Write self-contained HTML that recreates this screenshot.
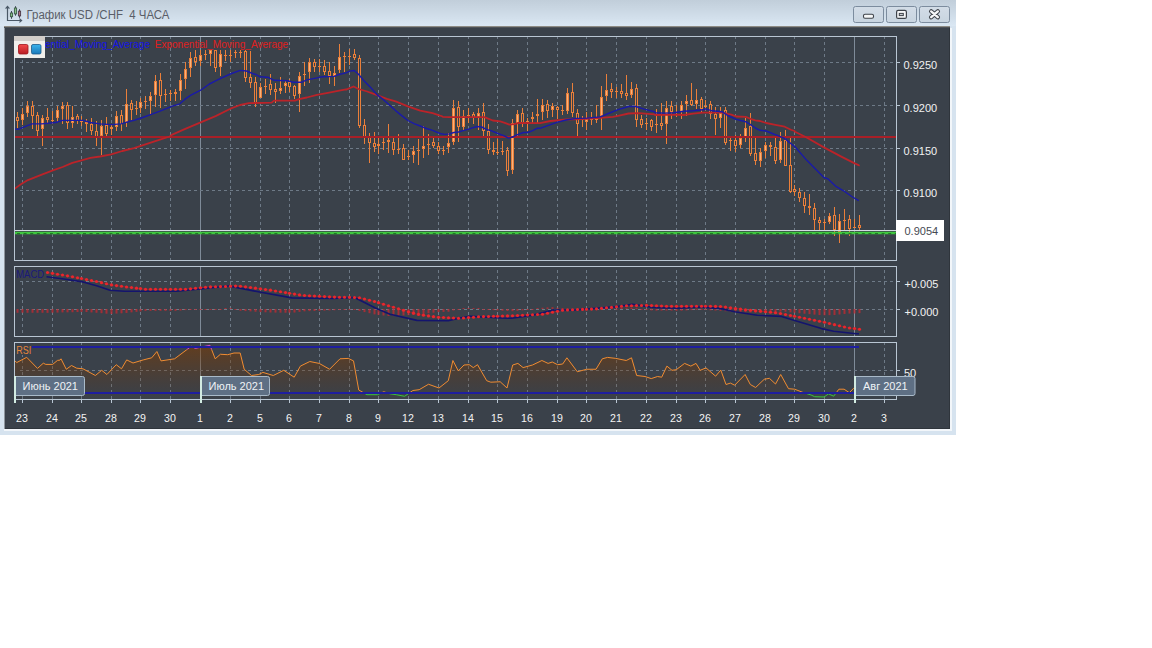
<!DOCTYPE html><html><head><meta charset="utf-8"><title>USD/CHF</title><style>
html,body{margin:0;padding:0;width:1152px;height:648px;background:#fff;overflow:hidden}
svg{display:block;font-family:"Liberation Sans",sans-serif}
</style></head><body>
<svg width="1152" height="648" viewBox="0 0 1152 648">
<defs>
<linearGradient id="tb" x1="0" y1="0" x2="0" y2="1"><stop offset="0" stop-color="#c1ceda"/><stop offset="1" stop-color="#dae7f3"/></linearGradient>
<linearGradient id="btn" x1="0" y1="0" x2="0" y2="1"><stop offset="0" stop-color="#d3dde7"/><stop offset="1" stop-color="#c8d4e0"/></linearGradient>
<linearGradient id="rsif" x1="0" y1="342" x2="0" y2="399" gradientUnits="userSpaceOnUse"><stop offset="0" stop-color="#803c00" stop-opacity="0.62"/><stop offset="1" stop-color="#6a3408" stop-opacity="0.0"/></linearGradient>
<linearGradient id="lr" x1="0" y1="0" x2="0" y2="1"><stop offset="0" stop-color="#f24a4a"/><stop offset="1" stop-color="#b81c22"/></linearGradient>
<linearGradient id="lb" x1="0" y1="0" x2="0" y2="1"><stop offset="0" stop-color="#3cb4ec"/><stop offset="1" stop-color="#1a78b8"/></linearGradient>
<clipPath id="cmain"><rect x="15" y="37" width="881" height="223"/></clipPath>
<clipPath id="cmacd"><rect x="15" y="267" width="881" height="69"/></clipPath>
<clipPath id="crsi"><rect x="15" y="343" width="881" height="56"/></clipPath><clipPath id="rsimid"><rect x="15" y="349.5" width="881" height="44.5"/></clipPath><clipPath id="rsitop"><rect x="15" y="343" width="881" height="6.5"/></clipPath><clipPath id="rsibot"><rect x="15" y="394" width="881" height="5"/></clipPath>
</defs>
<rect x="0" y="0" width="956" height="435" fill="#d6e3ef"/>
<rect x="0" y="0" width="956" height="26" fill="url(#tb)"/>
<rect x="4" y="26" width="946" height="1" fill="#8d8b84"/>
<rect x="4" y="27" width="1" height="402" fill="#8f969e"/>
<rect x="4" y="27" width="946" height="1" fill="#4e5257"/>
<rect x="5" y="28" width="945" height="401" fill="#3a414a"/>
<rect x="4" y="429" width="948" height="2" fill="#f2f6fa"/>
<rect x="950" y="28" width="2" height="403" fill="#f2f6fa"/>
<rect x="5" y="428" width="945" height="1" fill="#2f353c"/>
<rect x="949" y="28" width="1" height="401" fill="#2f353c"/>
<g fill="none" stroke="#4a5866" stroke-width="1.2">
<path d="M7.5 7 V20.5 H21"/><path d="M5.6 8.6 L7.5 6.4 L9.4 8.6"/><path d="M19.4 18.6 L21.6 20.5 L19.4 22.4"/>
</g>
<g stroke="#3e4a56" stroke-width="1">
<line x1="11.5" y1="11" x2="11.5" y2="18.8"/><line x1="15.5" y1="6.2" x2="15.5" y2="15.7"/><line x1="19.5" y1="9.2" x2="19.5" y2="17.8"/>
</g>
<rect x="10.4" y="13" width="2.2" height="3.7" fill="#84c484" stroke="#3e5a48" stroke-width="0.9"/>
<rect x="14.4" y="8" width="2.2" height="5.9" fill="#84c484" stroke="#3e5a48" stroke-width="0.9"/>
<rect x="18.4" y="11.1" width="2.2" height="4.8" fill="#b07080" stroke="#4a3a48" stroke-width="0.9"/>
<text x="26.5" y="19" font-size="12" fill="#5a5e68" textLength="143" lengthAdjust="spacingAndGlyphs">График USD /CHF&#160; 4 ЧАСА</text>
<rect x="853.5" y="6.5" width="30" height="16" rx="2" fill="url(#btn)" stroke="#7c8c9e"/>
<rect x="886.5" y="6.5" width="30" height="16" rx="2" fill="url(#btn)" stroke="#7c8c9e"/>
<rect x="919.5" y="6.5" width="30" height="16" rx="2" fill="url(#btn)" stroke="#7c8c9e"/>
<rect x="863.5" y="14.2" width="10" height="4" rx="1.5" fill="#f6f7f8" stroke="#3e434a" stroke-width="1.1"/>
<rect x="896.6" y="10.4" width="9.8" height="8" rx="1.5" fill="#f6f7f8" stroke="#3e434a" stroke-width="1.2"/>
<rect x="899.3" y="13.4" width="4" height="2.2" fill="#c8ccd0" stroke="#3e434a" stroke-width="1"/>
<path d="M931.2 11.4 L937.8 17.2 M937.8 11.4 L931.2 17.2" stroke="#3e434a" stroke-width="4.4" stroke-linecap="round"/>
<path d="M931.2 11.4 L937.8 17.2 M937.8 11.4 L931.2 17.2" stroke="#f6f7f8" stroke-width="2.4" stroke-linecap="round"/>
<clipPath id="pc0"><rect x="15" y="37.0" width="881" height="223.0"/></clipPath>
<rect x="14.5" y="36.5" width="882" height="224.0" fill="none" stroke="#b9c6d3"/>
<g clip-path="url(#pc0)">
<line x1="22.5" y1="36" x2="22.5" y2="260.0" stroke="#6e7a87" stroke-dasharray="3,3"/>
<line x1="52.5" y1="36" x2="52.5" y2="260.0" stroke="#6e7a87" stroke-dasharray="3,3"/>
<line x1="81.5" y1="36" x2="81.5" y2="260.0" stroke="#6e7a87" stroke-dasharray="3,3"/>
<line x1="111.5" y1="36" x2="111.5" y2="260.0" stroke="#6e7a87" stroke-dasharray="3,3"/>
<line x1="140.5" y1="36" x2="140.5" y2="260.0" stroke="#6e7a87" stroke-dasharray="3,3"/>
<line x1="170.5" y1="36" x2="170.5" y2="260.0" stroke="#6e7a87" stroke-dasharray="3,3"/>
<line x1="200.5" y1="37.0" x2="200.5" y2="260.0" stroke="#7f8b99"/>
<line x1="230.5" y1="36" x2="230.5" y2="260.0" stroke="#6e7a87" stroke-dasharray="3,3"/>
<line x1="260.5" y1="36" x2="260.5" y2="260.0" stroke="#6e7a87" stroke-dasharray="3,3"/>
<line x1="289.5" y1="36" x2="289.5" y2="260.0" stroke="#6e7a87" stroke-dasharray="3,3"/>
<line x1="319.5" y1="36" x2="319.5" y2="260.0" stroke="#6e7a87" stroke-dasharray="3,3"/>
<line x1="349.5" y1="36" x2="349.5" y2="260.0" stroke="#6e7a87" stroke-dasharray="3,3"/>
<line x1="378.5" y1="36" x2="378.5" y2="260.0" stroke="#6e7a87" stroke-dasharray="3,3"/>
<line x1="408.5" y1="36" x2="408.5" y2="260.0" stroke="#6e7a87" stroke-dasharray="3,3"/>
<line x1="438.5" y1="36" x2="438.5" y2="260.0" stroke="#6e7a87" stroke-dasharray="3,3"/>
<line x1="468.5" y1="36" x2="468.5" y2="260.0" stroke="#6e7a87" stroke-dasharray="3,3"/>
<line x1="497.5" y1="36" x2="497.5" y2="260.0" stroke="#6e7a87" stroke-dasharray="3,3"/>
<line x1="527.5" y1="36" x2="527.5" y2="260.0" stroke="#6e7a87" stroke-dasharray="3,3"/>
<line x1="557.5" y1="36" x2="557.5" y2="260.0" stroke="#6e7a87" stroke-dasharray="3,3"/>
<line x1="586.5" y1="36" x2="586.5" y2="260.0" stroke="#6e7a87" stroke-dasharray="3,3"/>
<line x1="616.5" y1="36" x2="616.5" y2="260.0" stroke="#6e7a87" stroke-dasharray="3,3"/>
<line x1="646.5" y1="36" x2="646.5" y2="260.0" stroke="#6e7a87" stroke-dasharray="3,3"/>
<line x1="676.5" y1="36" x2="676.5" y2="260.0" stroke="#6e7a87" stroke-dasharray="3,3"/>
<line x1="705.5" y1="36" x2="705.5" y2="260.0" stroke="#6e7a87" stroke-dasharray="3,3"/>
<line x1="735.5" y1="36" x2="735.5" y2="260.0" stroke="#6e7a87" stroke-dasharray="3,3"/>
<line x1="765.5" y1="36" x2="765.5" y2="260.0" stroke="#6e7a87" stroke-dasharray="3,3"/>
<line x1="794.5" y1="36" x2="794.5" y2="260.0" stroke="#6e7a87" stroke-dasharray="3,3"/>
<line x1="824.5" y1="36" x2="824.5" y2="260.0" stroke="#6e7a87" stroke-dasharray="3,3"/>
<line x1="854.5" y1="37.0" x2="854.5" y2="260.0" stroke="#7f8b99"/>
<line x1="884.5" y1="36" x2="884.5" y2="260.0" stroke="#6e7a87" stroke-dasharray="3,3"/>
</g>
<clipPath id="pc1"><rect x="15" y="267.0" width="881" height="69.0"/></clipPath>
<rect x="14.5" y="266.5" width="882" height="70.0" fill="none" stroke="#b9c6d3"/>
<g clip-path="url(#pc1)">
<line x1="22.5" y1="264" x2="22.5" y2="336.0" stroke="#6e7a87" stroke-dasharray="3,3"/>
<line x1="52.5" y1="264" x2="52.5" y2="336.0" stroke="#6e7a87" stroke-dasharray="3,3"/>
<line x1="81.5" y1="264" x2="81.5" y2="336.0" stroke="#6e7a87" stroke-dasharray="3,3"/>
<line x1="111.5" y1="264" x2="111.5" y2="336.0" stroke="#6e7a87" stroke-dasharray="3,3"/>
<line x1="140.5" y1="264" x2="140.5" y2="336.0" stroke="#6e7a87" stroke-dasharray="3,3"/>
<line x1="170.5" y1="264" x2="170.5" y2="336.0" stroke="#6e7a87" stroke-dasharray="3,3"/>
<line x1="200.5" y1="267.0" x2="200.5" y2="336.0" stroke="#7f8b99"/>
<line x1="230.5" y1="264" x2="230.5" y2="336.0" stroke="#6e7a87" stroke-dasharray="3,3"/>
<line x1="260.5" y1="264" x2="260.5" y2="336.0" stroke="#6e7a87" stroke-dasharray="3,3"/>
<line x1="289.5" y1="264" x2="289.5" y2="336.0" stroke="#6e7a87" stroke-dasharray="3,3"/>
<line x1="319.5" y1="264" x2="319.5" y2="336.0" stroke="#6e7a87" stroke-dasharray="3,3"/>
<line x1="349.5" y1="264" x2="349.5" y2="336.0" stroke="#6e7a87" stroke-dasharray="3,3"/>
<line x1="378.5" y1="264" x2="378.5" y2="336.0" stroke="#6e7a87" stroke-dasharray="3,3"/>
<line x1="408.5" y1="264" x2="408.5" y2="336.0" stroke="#6e7a87" stroke-dasharray="3,3"/>
<line x1="438.5" y1="264" x2="438.5" y2="336.0" stroke="#6e7a87" stroke-dasharray="3,3"/>
<line x1="468.5" y1="264" x2="468.5" y2="336.0" stroke="#6e7a87" stroke-dasharray="3,3"/>
<line x1="497.5" y1="264" x2="497.5" y2="336.0" stroke="#6e7a87" stroke-dasharray="3,3"/>
<line x1="527.5" y1="264" x2="527.5" y2="336.0" stroke="#6e7a87" stroke-dasharray="3,3"/>
<line x1="557.5" y1="264" x2="557.5" y2="336.0" stroke="#6e7a87" stroke-dasharray="3,3"/>
<line x1="586.5" y1="264" x2="586.5" y2="336.0" stroke="#6e7a87" stroke-dasharray="3,3"/>
<line x1="616.5" y1="264" x2="616.5" y2="336.0" stroke="#6e7a87" stroke-dasharray="3,3"/>
<line x1="646.5" y1="264" x2="646.5" y2="336.0" stroke="#6e7a87" stroke-dasharray="3,3"/>
<line x1="676.5" y1="264" x2="676.5" y2="336.0" stroke="#6e7a87" stroke-dasharray="3,3"/>
<line x1="705.5" y1="264" x2="705.5" y2="336.0" stroke="#6e7a87" stroke-dasharray="3,3"/>
<line x1="735.5" y1="264" x2="735.5" y2="336.0" stroke="#6e7a87" stroke-dasharray="3,3"/>
<line x1="765.5" y1="264" x2="765.5" y2="336.0" stroke="#6e7a87" stroke-dasharray="3,3"/>
<line x1="794.5" y1="264" x2="794.5" y2="336.0" stroke="#6e7a87" stroke-dasharray="3,3"/>
<line x1="824.5" y1="264" x2="824.5" y2="336.0" stroke="#6e7a87" stroke-dasharray="3,3"/>
<line x1="854.5" y1="267.0" x2="854.5" y2="336.0" stroke="#7f8b99"/>
<line x1="884.5" y1="264" x2="884.5" y2="336.0" stroke="#6e7a87" stroke-dasharray="3,3"/>
</g>
<clipPath id="pc2"><rect x="15" y="343.0" width="881" height="56.0"/></clipPath>
<rect x="14.5" y="342.5" width="882" height="57.0" fill="none" stroke="#b9c6d3"/>
<g clip-path="url(#pc2)">
<line x1="22.5" y1="342" x2="22.5" y2="399.0" stroke="#6e7a87" stroke-dasharray="3,3"/>
<line x1="52.5" y1="342" x2="52.5" y2="399.0" stroke="#6e7a87" stroke-dasharray="3,3"/>
<line x1="81.5" y1="342" x2="81.5" y2="399.0" stroke="#6e7a87" stroke-dasharray="3,3"/>
<line x1="111.5" y1="342" x2="111.5" y2="399.0" stroke="#6e7a87" stroke-dasharray="3,3"/>
<line x1="140.5" y1="342" x2="140.5" y2="399.0" stroke="#6e7a87" stroke-dasharray="3,3"/>
<line x1="170.5" y1="342" x2="170.5" y2="399.0" stroke="#6e7a87" stroke-dasharray="3,3"/>
<line x1="200.5" y1="343.0" x2="200.5" y2="399.0" stroke="#7f8b99"/>
<line x1="230.5" y1="342" x2="230.5" y2="399.0" stroke="#6e7a87" stroke-dasharray="3,3"/>
<line x1="260.5" y1="342" x2="260.5" y2="399.0" stroke="#6e7a87" stroke-dasharray="3,3"/>
<line x1="289.5" y1="342" x2="289.5" y2="399.0" stroke="#6e7a87" stroke-dasharray="3,3"/>
<line x1="319.5" y1="342" x2="319.5" y2="399.0" stroke="#6e7a87" stroke-dasharray="3,3"/>
<line x1="349.5" y1="342" x2="349.5" y2="399.0" stroke="#6e7a87" stroke-dasharray="3,3"/>
<line x1="378.5" y1="342" x2="378.5" y2="399.0" stroke="#6e7a87" stroke-dasharray="3,3"/>
<line x1="408.5" y1="342" x2="408.5" y2="399.0" stroke="#6e7a87" stroke-dasharray="3,3"/>
<line x1="438.5" y1="342" x2="438.5" y2="399.0" stroke="#6e7a87" stroke-dasharray="3,3"/>
<line x1="468.5" y1="342" x2="468.5" y2="399.0" stroke="#6e7a87" stroke-dasharray="3,3"/>
<line x1="497.5" y1="342" x2="497.5" y2="399.0" stroke="#6e7a87" stroke-dasharray="3,3"/>
<line x1="527.5" y1="342" x2="527.5" y2="399.0" stroke="#6e7a87" stroke-dasharray="3,3"/>
<line x1="557.5" y1="342" x2="557.5" y2="399.0" stroke="#6e7a87" stroke-dasharray="3,3"/>
<line x1="586.5" y1="342" x2="586.5" y2="399.0" stroke="#6e7a87" stroke-dasharray="3,3"/>
<line x1="616.5" y1="342" x2="616.5" y2="399.0" stroke="#6e7a87" stroke-dasharray="3,3"/>
<line x1="646.5" y1="342" x2="646.5" y2="399.0" stroke="#6e7a87" stroke-dasharray="3,3"/>
<line x1="676.5" y1="342" x2="676.5" y2="399.0" stroke="#6e7a87" stroke-dasharray="3,3"/>
<line x1="705.5" y1="342" x2="705.5" y2="399.0" stroke="#6e7a87" stroke-dasharray="3,3"/>
<line x1="735.5" y1="342" x2="735.5" y2="399.0" stroke="#6e7a87" stroke-dasharray="3,3"/>
<line x1="765.5" y1="342" x2="765.5" y2="399.0" stroke="#6e7a87" stroke-dasharray="3,3"/>
<line x1="794.5" y1="342" x2="794.5" y2="399.0" stroke="#6e7a87" stroke-dasharray="3,3"/>
<line x1="824.5" y1="342" x2="824.5" y2="399.0" stroke="#6e7a87" stroke-dasharray="3,3"/>
<line x1="854.5" y1="343.0" x2="854.5" y2="399.0" stroke="#7f8b99"/>
<line x1="884.5" y1="342" x2="884.5" y2="399.0" stroke="#6e7a87" stroke-dasharray="3,3"/>
</g>
<line x1="20" y1="62.5" x2="896" y2="62.5" stroke="#6e7a87" stroke-dasharray="3,3"/>
<line x1="896.5" y1="62.5" x2="900" y2="62.5" stroke="#b9c6d3"/>
<line x1="20" y1="105.5" x2="896" y2="105.5" stroke="#6e7a87" stroke-dasharray="3,3"/>
<line x1="896.5" y1="105.5" x2="900" y2="105.5" stroke="#b9c6d3"/>
<line x1="20" y1="148.5" x2="896" y2="148.5" stroke="#6e7a87" stroke-dasharray="3,3"/>
<line x1="896.5" y1="148.5" x2="900" y2="148.5" stroke="#b9c6d3"/>
<line x1="20" y1="190.5" x2="896" y2="190.5" stroke="#6e7a87" stroke-dasharray="3,3"/>
<line x1="896.5" y1="190.5" x2="900" y2="190.5" stroke="#b9c6d3"/>
<text x="903.5" y="69.0" font-size="11" fill="#f2f2f2">0.9250</text>
<text x="903.5" y="112.0" font-size="11" fill="#f2f2f2">0.9200</text>
<text x="903.5" y="155.0" font-size="11" fill="#f2f2f2">0.9150</text>
<text x="903.5" y="197.0" font-size="11" fill="#f2f2f2">0.9100</text>
<line x1="20" y1="281.5" x2="896" y2="281.5" stroke="#6e7a87" stroke-dasharray="3,3"/>
<line x1="896.5" y1="281.5" x2="900" y2="281.5" stroke="#b9c6d3"/>
<text x="904.5" y="288.0" font-size="11" fill="#f2f2f2">+0.005</text>
<line x1="20" y1="309.5" x2="896" y2="309.5" stroke="#6e7a87" stroke-dasharray="3,3"/>
<line x1="896.5" y1="309.5" x2="900" y2="309.5" stroke="#b9c6d3"/>
<text x="904.5" y="316.0" font-size="11" fill="#f2f2f2">+0.000</text>
<line x1="20" y1="370.5" x2="896" y2="370.5" stroke="#6e7a87" stroke-dasharray="3,3"/>
<line x1="896.5" y1="370.5" x2="900" y2="370.5" stroke="#b9c6d3"/>
<text x="904" y="377" font-size="11" fill="#f2f2f2">50</text>
<g clip-path="url(#cmain)">
<line x1="17.5" y1="112" x2="17.5" y2="128" stroke="#ea7f3a"/>
<rect x="16.5" y="117.5" width="2" height="3" fill="#3a414a" stroke="#ea7f3a"/>
<line x1="22.5" y1="108" x2="22.5" y2="125" stroke="#ea7f3a"/>
<rect x="21.5" y="114.5" width="2" height="5" fill="#fbb27a" stroke="#ea7f3a"/>
<line x1="27.5" y1="101" x2="27.5" y2="117" stroke="#ea7f3a"/>
<rect x="26.5" y="106.5" width="2" height="6" fill="#fbb27a" stroke="#ea7f3a"/>
<line x1="32.5" y1="101" x2="32.5" y2="129" stroke="#ea7f3a"/>
<rect x="31.5" y="106.5" width="2" height="9" fill="#3a414a" stroke="#ea7f3a"/>
<line x1="37.5" y1="112" x2="37.5" y2="136" stroke="#ea7f3a"/>
<rect x="36.5" y="115.5" width="2" height="15" fill="#3a414a" stroke="#ea7f3a"/>
<line x1="42.5" y1="115" x2="42.5" y2="146" stroke="#ea7f3a"/>
<rect x="41.5" y="118.5" width="2" height="10" fill="#fbb27a" stroke="#ea7f3a"/>
<line x1="47.5" y1="108" x2="47.5" y2="124" stroke="#ea7f3a"/>
<rect x="46.5" y="117.5" width="2" height="2" fill="#3a414a" stroke="#ea7f3a"/>
<line x1="52.5" y1="111" x2="52.5" y2="124" stroke="#ea7f3a"/>
<rect x="51" y="120" width="3" height="1" fill="#ea7f3a"/>
<line x1="57.5" y1="106" x2="57.5" y2="122" stroke="#ea7f3a"/>
<rect x="56.5" y="110.5" width="2" height="7" fill="#fbb27a" stroke="#ea7f3a"/>
<line x1="62.5" y1="102" x2="62.5" y2="124" stroke="#ea7f3a"/>
<rect x="61.5" y="106.5" width="2" height="2" fill="#fbb27a" stroke="#ea7f3a"/>
<line x1="67.5" y1="102" x2="67.5" y2="129" stroke="#ea7f3a"/>
<rect x="66.5" y="105.5" width="2" height="17" fill="#3a414a" stroke="#ea7f3a"/>
<line x1="72.5" y1="106" x2="72.5" y2="128" stroke="#ea7f3a"/>
<rect x="71.5" y="117.5" width="2" height="5" fill="#fbb27a" stroke="#ea7f3a"/>
<line x1="77.5" y1="114" x2="77.5" y2="124" stroke="#ea7f3a"/>
<rect x="76.5" y="116.5" width="2" height="4" fill="#3a414a" stroke="#ea7f3a"/>
<line x1="81.5" y1="116" x2="81.5" y2="126" stroke="#ea7f3a"/>
<rect x="80" y="121" width="3" height="1" fill="#ea7f3a"/>
<line x1="86.5" y1="119" x2="86.5" y2="132" stroke="#ea7f3a"/>
<rect x="85.5" y="122.5" width="2" height="1" fill="#3a414a" stroke="#ea7f3a"/>
<line x1="91.5" y1="118" x2="91.5" y2="135" stroke="#ea7f3a"/>
<rect x="90.5" y="124.5" width="2" height="6" fill="#3a414a" stroke="#ea7f3a"/>
<line x1="96.5" y1="121" x2="96.5" y2="146" stroke="#ea7f3a"/>
<rect x="95.5" y="131.5" width="2" height="5" fill="#3a414a" stroke="#ea7f3a"/>
<line x1="101.5" y1="120" x2="101.5" y2="155" stroke="#ea7f3a"/>
<rect x="100.5" y="126.5" width="2" height="9" fill="#fbb27a" stroke="#ea7f3a"/>
<line x1="106.5" y1="117" x2="106.5" y2="136" stroke="#ea7f3a"/>
<rect x="105.5" y="125.5" width="2" height="8" fill="#3a414a" stroke="#ea7f3a"/>
<line x1="111.5" y1="124" x2="111.5" y2="135" stroke="#ea7f3a"/>
<rect x="110.5" y="127.5" width="2" height="1" fill="#fbb27a" stroke="#ea7f3a"/>
<line x1="116.5" y1="111" x2="116.5" y2="131" stroke="#ea7f3a"/>
<rect x="115.5" y="116.5" width="2" height="10" fill="#fbb27a" stroke="#ea7f3a"/>
<line x1="121.5" y1="110" x2="121.5" y2="131" stroke="#ea7f3a"/>
<rect x="120.5" y="115.5" width="2" height="8" fill="#3a414a" stroke="#ea7f3a"/>
<line x1="126.5" y1="89" x2="126.5" y2="127" stroke="#ea7f3a"/>
<rect x="125.5" y="104.5" width="2" height="17" fill="#fbb27a" stroke="#ea7f3a"/>
<line x1="131.5" y1="100" x2="131.5" y2="120" stroke="#ea7f3a"/>
<rect x="130.5" y="103.5" width="2" height="6" fill="#3a414a" stroke="#ea7f3a"/>
<line x1="136.5" y1="101" x2="136.5" y2="115" stroke="#ea7f3a"/>
<rect x="135" y="108" width="3" height="1" fill="#ea7f3a"/>
<line x1="140.5" y1="98" x2="140.5" y2="113" stroke="#ea7f3a"/>
<rect x="139.5" y="102.5" width="2" height="5" fill="#fbb27a" stroke="#ea7f3a"/>
<line x1="145.5" y1="96" x2="145.5" y2="109" stroke="#ea7f3a"/>
<rect x="144" y="101" width="3" height="1" fill="#ea7f3a"/>
<line x1="150.5" y1="92" x2="150.5" y2="114" stroke="#ea7f3a"/>
<rect x="149.5" y="96.5" width="2" height="4" fill="#fbb27a" stroke="#ea7f3a"/>
<line x1="155.5" y1="75" x2="155.5" y2="107" stroke="#ea7f3a"/>
<rect x="154.5" y="81.5" width="2" height="13" fill="#fbb27a" stroke="#ea7f3a"/>
<line x1="160.5" y1="73" x2="160.5" y2="108" stroke="#ea7f3a"/>
<rect x="159.5" y="80.5" width="2" height="15" fill="#3a414a" stroke="#ea7f3a"/>
<line x1="165.5" y1="89" x2="165.5" y2="102" stroke="#ea7f3a"/>
<rect x="164" y="94" width="3" height="1" fill="#ea7f3a"/>
<line x1="170.5" y1="90" x2="170.5" y2="101" stroke="#ea7f3a"/>
<rect x="169" y="93" width="3" height="1" fill="#ea7f3a"/>
<line x1="175.5" y1="89" x2="175.5" y2="101" stroke="#ea7f3a"/>
<rect x="174.5" y="92.5" width="2" height="1" fill="#fbb27a" stroke="#ea7f3a"/>
<line x1="180.5" y1="74" x2="180.5" y2="100" stroke="#ea7f3a"/>
<rect x="179.5" y="80.5" width="2" height="10" fill="#fbb27a" stroke="#ea7f3a"/>
<line x1="185.5" y1="62" x2="185.5" y2="89" stroke="#ea7f3a"/>
<rect x="184.5" y="69.5" width="2" height="9" fill="#fbb27a" stroke="#ea7f3a"/>
<line x1="190.5" y1="52" x2="190.5" y2="77" stroke="#ea7f3a"/>
<rect x="189.5" y="58.5" width="2" height="9" fill="#fbb27a" stroke="#ea7f3a"/>
<line x1="195.5" y1="50" x2="195.5" y2="66" stroke="#ea7f3a"/>
<rect x="194.5" y="57.5" width="2" height="4" fill="#3a414a" stroke="#ea7f3a"/>
<line x1="200.5" y1="50" x2="200.5" y2="66" stroke="#ea7f3a"/>
<rect x="199.5" y="55.5" width="2" height="5" fill="#fbb27a" stroke="#ea7f3a"/>
<line x1="205.5" y1="50" x2="205.5" y2="60" stroke="#ea7f3a"/>
<rect x="204" y="54" width="3" height="1" fill="#ea7f3a"/>
<line x1="210.5" y1="50" x2="210.5" y2="66" stroke="#ea7f3a"/>
<rect x="209.5" y="50.5" width="2" height="3" fill="#fbb27a" stroke="#ea7f3a"/>
<line x1="215.5" y1="50" x2="215.5" y2="72" stroke="#ea7f3a"/>
<rect x="214.5" y="50.5" width="2" height="17" fill="#3a414a" stroke="#ea7f3a"/>
<line x1="220.5" y1="50" x2="220.5" y2="76" stroke="#ea7f3a"/>
<rect x="219.5" y="54.5" width="2" height="12" fill="#fbb27a" stroke="#ea7f3a"/>
<line x1="225.5" y1="50" x2="225.5" y2="61" stroke="#ea7f3a"/>
<rect x="224" y="55" width="3" height="1" fill="#ea7f3a"/>
<line x1="230.5" y1="50" x2="230.5" y2="62" stroke="#ea7f3a"/>
<rect x="229" y="55" width="3" height="1" fill="#ea7f3a"/>
<line x1="235.5" y1="50" x2="235.5" y2="58" stroke="#ea7f3a"/>
<rect x="234" y="52" width="3" height="1" fill="#ea7f3a"/>
<line x1="240.5" y1="50" x2="240.5" y2="58" stroke="#ea7f3a"/>
<rect x="239" y="52" width="3" height="1" fill="#ea7f3a"/>
<line x1="245.5" y1="50" x2="245.5" y2="82" stroke="#ea7f3a"/>
<rect x="244.5" y="51.5" width="2" height="26" fill="#3a414a" stroke="#ea7f3a"/>
<line x1="250.5" y1="51" x2="250.5" y2="88" stroke="#ea7f3a"/>
<rect x="249.5" y="77.5" width="2" height="5" fill="#3a414a" stroke="#ea7f3a"/>
<line x1="255.5" y1="77" x2="255.5" y2="107" stroke="#ea7f3a"/>
<rect x="254.5" y="82.5" width="2" height="20" fill="#3a414a" stroke="#ea7f3a"/>
<line x1="260.5" y1="83" x2="260.5" y2="98" stroke="#ea7f3a"/>
<rect x="259.5" y="87.5" width="2" height="10" fill="#fbb27a" stroke="#ea7f3a"/>
<line x1="265.5" y1="79" x2="265.5" y2="94" stroke="#ea7f3a"/>
<rect x="264" y="86" width="3" height="1" fill="#ea7f3a"/>
<line x1="270.5" y1="74" x2="270.5" y2="95" stroke="#ea7f3a"/>
<rect x="269.5" y="84.5" width="2" height="5" fill="#3a414a" stroke="#ea7f3a"/>
<line x1="275.5" y1="83" x2="275.5" y2="103" stroke="#ea7f3a"/>
<rect x="274.5" y="89.5" width="2" height="2" fill="#3a414a" stroke="#ea7f3a"/>
<line x1="280.5" y1="77" x2="280.5" y2="94" stroke="#ea7f3a"/>
<rect x="279.5" y="88.5" width="2" height="2" fill="#fbb27a" stroke="#ea7f3a"/>
<line x1="285.5" y1="80" x2="285.5" y2="93" stroke="#ea7f3a"/>
<rect x="284.5" y="83.5" width="2" height="2" fill="#fbb27a" stroke="#ea7f3a"/>
<line x1="289.5" y1="79" x2="289.5" y2="92" stroke="#ea7f3a"/>
<rect x="288.5" y="82.5" width="2" height="4" fill="#3a414a" stroke="#ea7f3a"/>
<line x1="294.5" y1="85" x2="294.5" y2="99" stroke="#ea7f3a"/>
<rect x="293.5" y="86.5" width="2" height="9" fill="#3a414a" stroke="#ea7f3a"/>
<line x1="299.5" y1="72" x2="299.5" y2="112" stroke="#ea7f3a"/>
<rect x="298.5" y="76.5" width="2" height="17" fill="#fbb27a" stroke="#ea7f3a"/>
<line x1="304.5" y1="62" x2="304.5" y2="86" stroke="#ea7f3a"/>
<rect x="303" y="74" width="3" height="1" fill="#ea7f3a"/>
<line x1="309.5" y1="58" x2="309.5" y2="83" stroke="#ea7f3a"/>
<rect x="308.5" y="62.5" width="2" height="9" fill="#fbb27a" stroke="#ea7f3a"/>
<line x1="314.5" y1="59" x2="314.5" y2="72" stroke="#ea7f3a"/>
<rect x="313.5" y="62.5" width="2" height="4" fill="#3a414a" stroke="#ea7f3a"/>
<line x1="319.5" y1="59" x2="319.5" y2="72" stroke="#ea7f3a"/>
<rect x="318" y="66" width="3" height="1" fill="#ea7f3a"/>
<line x1="324.5" y1="60" x2="324.5" y2="75" stroke="#ea7f3a"/>
<rect x="323.5" y="66.5" width="2" height="5" fill="#3a414a" stroke="#ea7f3a"/>
<line x1="329.5" y1="62" x2="329.5" y2="84" stroke="#ea7f3a"/>
<rect x="328.5" y="71.5" width="2" height="4" fill="#3a414a" stroke="#ea7f3a"/>
<line x1="334.5" y1="66" x2="334.5" y2="86" stroke="#ea7f3a"/>
<rect x="333.5" y="73.5" width="2" height="2" fill="#fbb27a" stroke="#ea7f3a"/>
<line x1="339.5" y1="44" x2="339.5" y2="73" stroke="#ea7f3a"/>
<rect x="338.5" y="57.5" width="2" height="12" fill="#fbb27a" stroke="#ea7f3a"/>
<line x1="344.5" y1="52" x2="344.5" y2="72" stroke="#ea7f3a"/>
<rect x="343" y="56" width="3" height="1" fill="#ea7f3a"/>
<line x1="349.5" y1="49" x2="349.5" y2="65" stroke="#ea7f3a"/>
<rect x="348" y="56" width="3" height="1" fill="#ea7f3a"/>
<line x1="354.5" y1="49" x2="354.5" y2="60" stroke="#ea7f3a"/>
<rect x="353.5" y="54.5" width="2" height="3" fill="#3a414a" stroke="#ea7f3a"/>
<line x1="359.5" y1="55" x2="359.5" y2="128" stroke="#ea7f3a"/>
<rect x="358.5" y="58.5" width="2" height="67" fill="#3a414a" stroke="#ea7f3a"/>
<line x1="364.5" y1="119" x2="364.5" y2="144" stroke="#ea7f3a"/>
<rect x="363.5" y="125.5" width="2" height="11" fill="#3a414a" stroke="#ea7f3a"/>
<line x1="369.5" y1="133" x2="369.5" y2="163" stroke="#ea7f3a"/>
<rect x="368.5" y="137.5" width="2" height="5" fill="#3a414a" stroke="#ea7f3a"/>
<line x1="374.5" y1="132" x2="374.5" y2="152" stroke="#ea7f3a"/>
<rect x="373.5" y="143.5" width="2" height="3" fill="#3a414a" stroke="#ea7f3a"/>
<line x1="378.5" y1="138" x2="378.5" y2="154" stroke="#ea7f3a"/>
<rect x="377.5" y="144.5" width="2" height="1" fill="#fbb27a" stroke="#ea7f3a"/>
<line x1="383.5" y1="138" x2="383.5" y2="150" stroke="#ea7f3a"/>
<rect x="382" y="142" width="3" height="1" fill="#ea7f3a"/>
<line x1="388.5" y1="124" x2="388.5" y2="153" stroke="#ea7f3a"/>
<rect x="387.5" y="140.5" width="2" height="1" fill="#3a414a" stroke="#ea7f3a"/>
<line x1="393.5" y1="138" x2="393.5" y2="155" stroke="#ea7f3a"/>
<rect x="392.5" y="142.5" width="2" height="7" fill="#3a414a" stroke="#ea7f3a"/>
<line x1="398.5" y1="134" x2="398.5" y2="154" stroke="#ea7f3a"/>
<rect x="397" y="149" width="3" height="1" fill="#ea7f3a"/>
<line x1="403.5" y1="144" x2="403.5" y2="160" stroke="#ea7f3a"/>
<rect x="402.5" y="148.5" width="2" height="11" fill="#3a414a" stroke="#ea7f3a"/>
<line x1="408.5" y1="150" x2="408.5" y2="160" stroke="#ea7f3a"/>
<rect x="407" y="156" width="3" height="1" fill="#ea7f3a"/>
<line x1="413.5" y1="146" x2="413.5" y2="163" stroke="#ea7f3a"/>
<rect x="412.5" y="151.5" width="2" height="3" fill="#fbb27a" stroke="#ea7f3a"/>
<line x1="418.5" y1="139" x2="418.5" y2="165" stroke="#ea7f3a"/>
<rect x="417" y="150" width="3" height="1" fill="#ea7f3a"/>
<line x1="423.5" y1="126" x2="423.5" y2="158" stroke="#ea7f3a"/>
<rect x="422.5" y="146.5" width="2" height="2" fill="#fbb27a" stroke="#ea7f3a"/>
<line x1="428.5" y1="134" x2="428.5" y2="155" stroke="#ea7f3a"/>
<rect x="427" y="144" width="3" height="1" fill="#ea7f3a"/>
<line x1="433.5" y1="138" x2="433.5" y2="148" stroke="#ea7f3a"/>
<rect x="432.5" y="142.5" width="2" height="3" fill="#3a414a" stroke="#ea7f3a"/>
<line x1="438.5" y1="142" x2="438.5" y2="154" stroke="#ea7f3a"/>
<rect x="437.5" y="146.5" width="2" height="4" fill="#3a414a" stroke="#ea7f3a"/>
<line x1="443.5" y1="146" x2="443.5" y2="155" stroke="#ea7f3a"/>
<rect x="442" y="150" width="3" height="1" fill="#ea7f3a"/>
<line x1="448.5" y1="133" x2="448.5" y2="153" stroke="#ea7f3a"/>
<rect x="447.5" y="143.5" width="2" height="3" fill="#fbb27a" stroke="#ea7f3a"/>
<line x1="453.5" y1="100" x2="453.5" y2="145" stroke="#ea7f3a"/>
<rect x="452.5" y="108.5" width="2" height="33" fill="#fbb27a" stroke="#ea7f3a"/>
<line x1="458.5" y1="101" x2="458.5" y2="142" stroke="#ea7f3a"/>
<rect x="457.5" y="107.5" width="2" height="19" fill="#3a414a" stroke="#ea7f3a"/>
<line x1="463.5" y1="110" x2="463.5" y2="130" stroke="#ea7f3a"/>
<rect x="462.5" y="116.5" width="2" height="10" fill="#fbb27a" stroke="#ea7f3a"/>
<line x1="468.5" y1="108" x2="468.5" y2="123" stroke="#ea7f3a"/>
<rect x="467" y="115" width="3" height="1" fill="#ea7f3a"/>
<line x1="473.5" y1="112" x2="473.5" y2="124" stroke="#ea7f3a"/>
<rect x="472.5" y="114.5" width="2" height="3" fill="#3a414a" stroke="#ea7f3a"/>
<line x1="478.5" y1="108" x2="478.5" y2="130" stroke="#ea7f3a"/>
<rect x="477.5" y="113.5" width="2" height="3" fill="#fbb27a" stroke="#ea7f3a"/>
<line x1="483.5" y1="103" x2="483.5" y2="136" stroke="#ea7f3a"/>
<rect x="482.5" y="112.5" width="2" height="18" fill="#3a414a" stroke="#ea7f3a"/>
<line x1="488.5" y1="124" x2="488.5" y2="154" stroke="#ea7f3a"/>
<rect x="487.5" y="131.5" width="2" height="18" fill="#3a414a" stroke="#ea7f3a"/>
<line x1="493.5" y1="142" x2="493.5" y2="155" stroke="#ea7f3a"/>
<rect x="492.5" y="150.5" width="2" height="1" fill="#3a414a" stroke="#ea7f3a"/>
<line x1="497.5" y1="139" x2="497.5" y2="155" stroke="#ea7f3a"/>
<rect x="496" y="152" width="3" height="1" fill="#ea7f3a"/>
<line x1="502.5" y1="141" x2="502.5" y2="155" stroke="#ea7f3a"/>
<rect x="501" y="151" width="3" height="1" fill="#ea7f3a"/>
<line x1="507.5" y1="147" x2="507.5" y2="176" stroke="#ea7f3a"/>
<rect x="506.5" y="150.5" width="2" height="20" fill="#3a414a" stroke="#ea7f3a"/>
<line x1="512.5" y1="119" x2="512.5" y2="174" stroke="#ea7f3a"/>
<rect x="511.5" y="123.5" width="2" height="46" fill="#fbb27a" stroke="#ea7f3a"/>
<line x1="517.5" y1="110" x2="517.5" y2="136" stroke="#ea7f3a"/>
<rect x="516.5" y="114.5" width="2" height="8" fill="#fbb27a" stroke="#ea7f3a"/>
<line x1="522.5" y1="108" x2="522.5" y2="127" stroke="#ea7f3a"/>
<rect x="521.5" y="113.5" width="2" height="9" fill="#3a414a" stroke="#ea7f3a"/>
<line x1="527.5" y1="118" x2="527.5" y2="131" stroke="#ea7f3a"/>
<rect x="526" y="121" width="3" height="1" fill="#ea7f3a"/>
<line x1="532.5" y1="112" x2="532.5" y2="124" stroke="#ea7f3a"/>
<rect x="531.5" y="117.5" width="2" height="1" fill="#fbb27a" stroke="#ea7f3a"/>
<line x1="537.5" y1="99" x2="537.5" y2="124" stroke="#ea7f3a"/>
<rect x="536.5" y="114.5" width="2" height="1" fill="#fbb27a" stroke="#ea7f3a"/>
<line x1="542.5" y1="99" x2="542.5" y2="120" stroke="#ea7f3a"/>
<rect x="541.5" y="105.5" width="2" height="6" fill="#fbb27a" stroke="#ea7f3a"/>
<line x1="547.5" y1="100" x2="547.5" y2="118" stroke="#ea7f3a"/>
<rect x="546.5" y="104.5" width="2" height="6" fill="#3a414a" stroke="#ea7f3a"/>
<line x1="552.5" y1="103" x2="552.5" y2="117" stroke="#ea7f3a"/>
<rect x="551.5" y="106.5" width="2" height="3" fill="#fbb27a" stroke="#ea7f3a"/>
<line x1="557.5" y1="106" x2="557.5" y2="119" stroke="#ea7f3a"/>
<rect x="556.5" y="107.5" width="2" height="2" fill="#3a414a" stroke="#ea7f3a"/>
<line x1="562.5" y1="105" x2="562.5" y2="115" stroke="#ea7f3a"/>
<rect x="561" y="110" width="3" height="1" fill="#ea7f3a"/>
<line x1="567.5" y1="88" x2="567.5" y2="114" stroke="#ea7f3a"/>
<rect x="566.5" y="93.5" width="2" height="17" fill="#fbb27a" stroke="#ea7f3a"/>
<line x1="572.5" y1="83" x2="572.5" y2="117" stroke="#ea7f3a"/>
<rect x="571.5" y="92.5" width="2" height="20" fill="#3a414a" stroke="#ea7f3a"/>
<line x1="577.5" y1="109" x2="577.5" y2="137" stroke="#ea7f3a"/>
<rect x="576.5" y="113.5" width="2" height="10" fill="#3a414a" stroke="#ea7f3a"/>
<line x1="582.5" y1="116" x2="582.5" y2="127" stroke="#ea7f3a"/>
<rect x="581" y="119" width="3" height="1" fill="#ea7f3a"/>
<line x1="586.5" y1="112" x2="586.5" y2="130" stroke="#ea7f3a"/>
<rect x="585.5" y="119.5" width="2" height="2" fill="#fbb27a" stroke="#ea7f3a"/>
<line x1="591.5" y1="112" x2="591.5" y2="125" stroke="#ea7f3a"/>
<rect x="590" y="119" width="3" height="1" fill="#ea7f3a"/>
<line x1="596.5" y1="105" x2="596.5" y2="123" stroke="#ea7f3a"/>
<rect x="595" y="119" width="3" height="1" fill="#ea7f3a"/>
<line x1="601.5" y1="86" x2="601.5" y2="130" stroke="#ea7f3a"/>
<rect x="600.5" y="97.5" width="2" height="18" fill="#fbb27a" stroke="#ea7f3a"/>
<line x1="606.5" y1="74" x2="606.5" y2="101" stroke="#ea7f3a"/>
<rect x="605.5" y="90.5" width="2" height="5" fill="#fbb27a" stroke="#ea7f3a"/>
<line x1="611.5" y1="83" x2="611.5" y2="98" stroke="#ea7f3a"/>
<rect x="610.5" y="89.5" width="2" height="2" fill="#3a414a" stroke="#ea7f3a"/>
<line x1="616.5" y1="87" x2="616.5" y2="98" stroke="#ea7f3a"/>
<rect x="615" y="91" width="3" height="1" fill="#ea7f3a"/>
<line x1="621.5" y1="84" x2="621.5" y2="98" stroke="#ea7f3a"/>
<rect x="620.5" y="91.5" width="2" height="2" fill="#3a414a" stroke="#ea7f3a"/>
<line x1="626.5" y1="75" x2="626.5" y2="100" stroke="#ea7f3a"/>
<rect x="625.5" y="93.5" width="2" height="2" fill="#3a414a" stroke="#ea7f3a"/>
<line x1="631.5" y1="82" x2="631.5" y2="98" stroke="#ea7f3a"/>
<rect x="630.5" y="89.5" width="2" height="5" fill="#fbb27a" stroke="#ea7f3a"/>
<line x1="636.5" y1="84" x2="636.5" y2="127" stroke="#ea7f3a"/>
<rect x="635.5" y="88.5" width="2" height="31" fill="#3a414a" stroke="#ea7f3a"/>
<line x1="641.5" y1="115" x2="641.5" y2="128" stroke="#ea7f3a"/>
<rect x="640.5" y="119.5" width="2" height="5" fill="#3a414a" stroke="#ea7f3a"/>
<line x1="646.5" y1="118" x2="646.5" y2="130" stroke="#ea7f3a"/>
<rect x="645" y="123" width="3" height="1" fill="#ea7f3a"/>
<line x1="651.5" y1="119" x2="651.5" y2="131" stroke="#ea7f3a"/>
<rect x="650.5" y="120.5" width="2" height="6" fill="#3a414a" stroke="#ea7f3a"/>
<line x1="656.5" y1="109" x2="656.5" y2="133" stroke="#ea7f3a"/>
<rect x="655" y="124" width="3" height="1" fill="#ea7f3a"/>
<line x1="661.5" y1="103" x2="661.5" y2="130" stroke="#ea7f3a"/>
<rect x="660.5" y="123.5" width="2" height="2" fill="#3a414a" stroke="#ea7f3a"/>
<line x1="666.5" y1="101" x2="666.5" y2="144" stroke="#ea7f3a"/>
<rect x="665.5" y="108.5" width="2" height="15" fill="#fbb27a" stroke="#ea7f3a"/>
<line x1="671.5" y1="101" x2="671.5" y2="119" stroke="#ea7f3a"/>
<rect x="670.5" y="106.5" width="2" height="5" fill="#3a414a" stroke="#ea7f3a"/>
<line x1="676.5" y1="105" x2="676.5" y2="117" stroke="#ea7f3a"/>
<rect x="675" y="112" width="3" height="1" fill="#ea7f3a"/>
<line x1="681.5" y1="101" x2="681.5" y2="119" stroke="#ea7f3a"/>
<rect x="680.5" y="105.5" width="2" height="6" fill="#fbb27a" stroke="#ea7f3a"/>
<line x1="686.5" y1="95" x2="686.5" y2="116" stroke="#ea7f3a"/>
<rect x="685.5" y="101.5" width="2" height="2" fill="#fbb27a" stroke="#ea7f3a"/>
<line x1="691.5" y1="83" x2="691.5" y2="106" stroke="#ea7f3a"/>
<rect x="690.5" y="100.5" width="2" height="4" fill="#3a414a" stroke="#ea7f3a"/>
<line x1="696.5" y1="89" x2="696.5" y2="109" stroke="#ea7f3a"/>
<rect x="695.5" y="100.5" width="2" height="3" fill="#fbb27a" stroke="#ea7f3a"/>
<line x1="701.5" y1="97" x2="701.5" y2="112" stroke="#ea7f3a"/>
<rect x="700.5" y="99.5" width="2" height="9" fill="#3a414a" stroke="#ea7f3a"/>
<line x1="705.5" y1="100" x2="705.5" y2="110" stroke="#ea7f3a"/>
<rect x="704" y="106" width="3" height="1" fill="#ea7f3a"/>
<line x1="710.5" y1="101" x2="710.5" y2="119" stroke="#ea7f3a"/>
<rect x="709.5" y="104.5" width="2" height="9" fill="#3a414a" stroke="#ea7f3a"/>
<line x1="715.5" y1="107" x2="715.5" y2="135" stroke="#ea7f3a"/>
<rect x="714.5" y="114.5" width="2" height="4" fill="#3a414a" stroke="#ea7f3a"/>
<line x1="720.5" y1="107" x2="720.5" y2="128" stroke="#ea7f3a"/>
<rect x="719.5" y="113.5" width="2" height="4" fill="#fbb27a" stroke="#ea7f3a"/>
<line x1="725.5" y1="107" x2="725.5" y2="145" stroke="#ea7f3a"/>
<rect x="724.5" y="110.5" width="2" height="32" fill="#3a414a" stroke="#ea7f3a"/>
<line x1="730.5" y1="136" x2="730.5" y2="151" stroke="#ea7f3a"/>
<rect x="729" y="140" width="3" height="1" fill="#ea7f3a"/>
<line x1="735.5" y1="135" x2="735.5" y2="152" stroke="#ea7f3a"/>
<rect x="734.5" y="140.5" width="2" height="5" fill="#3a414a" stroke="#ea7f3a"/>
<line x1="740.5" y1="134" x2="740.5" y2="148" stroke="#ea7f3a"/>
<rect x="739.5" y="138.5" width="2" height="6" fill="#fbb27a" stroke="#ea7f3a"/>
<line x1="745.5" y1="118" x2="745.5" y2="142" stroke="#ea7f3a"/>
<rect x="744.5" y="128.5" width="2" height="8" fill="#fbb27a" stroke="#ea7f3a"/>
<line x1="750.5" y1="113" x2="750.5" y2="156" stroke="#ea7f3a"/>
<rect x="749.5" y="126.5" width="2" height="27" fill="#3a414a" stroke="#ea7f3a"/>
<line x1="755.5" y1="138" x2="755.5" y2="165" stroke="#ea7f3a"/>
<rect x="754.5" y="153.5" width="2" height="7" fill="#3a414a" stroke="#ea7f3a"/>
<line x1="760.5" y1="148" x2="760.5" y2="167" stroke="#ea7f3a"/>
<rect x="759.5" y="152.5" width="2" height="8" fill="#fbb27a" stroke="#ea7f3a"/>
<line x1="765.5" y1="142" x2="765.5" y2="158" stroke="#ea7f3a"/>
<rect x="764.5" y="145.5" width="2" height="5" fill="#fbb27a" stroke="#ea7f3a"/>
<line x1="770.5" y1="142" x2="770.5" y2="156" stroke="#ea7f3a"/>
<rect x="769.5" y="145.5" width="2" height="1" fill="#3a414a" stroke="#ea7f3a"/>
<line x1="775.5" y1="138" x2="775.5" y2="164" stroke="#ea7f3a"/>
<rect x="774.5" y="147.5" width="2" height="13" fill="#3a414a" stroke="#ea7f3a"/>
<line x1="780.5" y1="132" x2="780.5" y2="163" stroke="#ea7f3a"/>
<rect x="779.5" y="141.5" width="2" height="18" fill="#fbb27a" stroke="#ea7f3a"/>
<line x1="785.5" y1="130" x2="785.5" y2="166" stroke="#ea7f3a"/>
<rect x="784.5" y="140.5" width="2" height="25" fill="#3a414a" stroke="#ea7f3a"/>
<line x1="790.5" y1="138" x2="790.5" y2="193" stroke="#ea7f3a"/>
<rect x="789.5" y="165.5" width="2" height="26" fill="#3a414a" stroke="#ea7f3a"/>
<line x1="794.5" y1="185" x2="794.5" y2="196" stroke="#ea7f3a"/>
<rect x="793.5" y="189.5" width="2" height="2" fill="#3a414a" stroke="#ea7f3a"/>
<line x1="799.5" y1="188" x2="799.5" y2="202" stroke="#ea7f3a"/>
<rect x="798.5" y="192.5" width="2" height="5" fill="#3a414a" stroke="#ea7f3a"/>
<line x1="804.5" y1="192" x2="804.5" y2="213" stroke="#ea7f3a"/>
<rect x="803.5" y="198.5" width="2" height="7" fill="#3a414a" stroke="#ea7f3a"/>
<line x1="809.5" y1="194" x2="809.5" y2="215" stroke="#ea7f3a"/>
<rect x="808.5" y="206.5" width="2" height="1" fill="#3a414a" stroke="#ea7f3a"/>
<line x1="814.5" y1="203" x2="814.5" y2="230" stroke="#ea7f3a"/>
<rect x="813.5" y="208.5" width="2" height="11" fill="#3a414a" stroke="#ea7f3a"/>
<line x1="819.5" y1="217" x2="819.5" y2="230" stroke="#ea7f3a"/>
<rect x="818.5" y="220.5" width="2" height="2" fill="#3a414a" stroke="#ea7f3a"/>
<line x1="824.5" y1="219" x2="824.5" y2="230" stroke="#ea7f3a"/>
<rect x="823" y="222" width="3" height="1" fill="#ea7f3a"/>
<line x1="829.5" y1="213" x2="829.5" y2="224" stroke="#ea7f3a"/>
<rect x="828.5" y="216.5" width="2" height="5" fill="#fbb27a" stroke="#ea7f3a"/>
<line x1="834.5" y1="207" x2="834.5" y2="236" stroke="#ea7f3a"/>
<rect x="833.5" y="215.5" width="2" height="14" fill="#3a414a" stroke="#ea7f3a"/>
<line x1="839.5" y1="214" x2="839.5" y2="243" stroke="#ea7f3a"/>
<rect x="838.5" y="221.5" width="2" height="10" fill="#fbb27a" stroke="#ea7f3a"/>
<line x1="844.5" y1="209" x2="844.5" y2="230" stroke="#ea7f3a"/>
<rect x="843" y="220" width="3" height="1" fill="#ea7f3a"/>
<line x1="849.5" y1="215" x2="849.5" y2="236" stroke="#ea7f3a"/>
<rect x="848.5" y="219.5" width="2" height="9" fill="#3a414a" stroke="#ea7f3a"/>
<line x1="854.5" y1="219" x2="854.5" y2="228" stroke="#ea7f3a"/>
<rect x="853" y="227" width="3" height="1" fill="#ea7f3a"/>
<line x1="859.5" y1="215" x2="859.5" y2="230" stroke="#ea7f3a"/>
<rect x="858.5" y="225.5" width="2" height="2" fill="#3a414a" stroke="#ea7f3a"/>
<line x1="15" y1="137" x2="896" y2="137" stroke="#a81f27" stroke-width="2"/>
<polyline points="14,189.2 20.9,184.3 27.9,180.1 41.8,174.6 52.9,170.4 62.6,167 72.3,162.8 80.7,160.7 90.4,157.9 100.1,156.5 111.2,154.4 122.3,151 134,148.2 159.9,139.6 169.7,136.5 172.3,134.6 184.7,129.1 200.7,122.3 215.6,116.1 230.4,108.7 240.2,105 248.9,103.1 256,103 271.6,102.6 274,100.6 295,100.6 299,99.1 306.8,97.5 317,94.8 327.9,92.8 338,90.9 346,89.3 346.2,89.6 353.6,86.5 358.5,89 367.2,91.5 377,95.2 386.9,98.9 395.6,101.4 407.9,106.3 420.2,110.6 432.6,113.1 440,115.6 441.4,116 442.8,116.8 449.3,117.2 484.4,117.2 488.1,118.6 492.8,120.5 500.2,121.4 504.8,122.8 509.4,124.6 514.1,124.2 518.7,122.8 540,123.1 550.4,121 566,119.5 581.7,119 600.4,117.9 612.9,116.9 618.1,115.8 628.5,113.5 639,113.2 654.6,114.3 655,115 674.1,114.6 683.7,115 693.2,113.6 702.8,112.7 721.9,112.7 731.4,114.6 736.2,116.5 745.7,116.8 750.5,118.9 755.3,120.3 760,121 766.2,123 775.4,124.8 784.7,126.7 790.9,129.75 794.6,131 795,131.7 806.6,137.5 823.9,147.4 841.3,156.6 855.2,163.6 859.2,165.3 859.3,165.1" fill="none" stroke="#bb2329" stroke-width="1.8" stroke-linejoin="round"/>
<polyline points="14,128.75 18.2,129.4 27.9,125.3 32,123.9 41.8,123.9 55.7,122.5 62.6,120.4 83.4,120.4 90.4,122.5 100.1,123.9 111.2,124.6 120.9,123.9 127.9,121.8 134,120.4 141.3,118 151.2,114.3 160,111.2 166.2,108.7 172.3,106.2 179.8,103.8 184.7,99.4 190.9,95.1 200.7,90.2 209.4,84 215.6,80.9 221.7,77.8 231.6,73.5 240.2,70.4 246.4,71 252.6,73.5 256,74.5 259.9,76.8 267.7,77.2 274,80.3 287.25,80.7 293.5,82.3 301.3,82.3 306.8,79.9 314.6,78.4 322.4,76.8 334.1,76.4 338,74.8 346,72.9 349.9,71.1 354.2,70.5 358.5,74.2 364.7,81.6 370.9,87.8 377,94.6 383.2,99.5 389.4,105 395.6,110.6 401.7,115.6 407.9,120.5 414,123.6 420.2,126 426.4,128.5 432.6,130.4 440,133.5 441.4,133.8 444.6,134.4 449.3,133.9 453.9,132.5 458.5,132 463.1,130.6 467.8,129.3 472.4,127.9 477,126.5 481.7,127 486.3,129.3 490.9,130.6 495.6,132.5 500.2,134.4 504.8,136.2 508.5,138.1 512.2,137.1 516.9,134.8 523.3,132.5 528,132.5 532.6,130.6 537.2,128.3 540,128.3 550.4,124.7 557.7,122.1 566,120 576.5,118.4 586.9,118.1 600.4,116.9 607.7,113.75 618.1,109.6 628.5,106.5 635.8,106.5 644.2,109.1 654.6,111.7 655,112.7 664.5,113.1 674.1,112.7 683.7,111.2 693.2,110.8 702.8,109.8 705.6,108.8 712.3,110.8 721.9,111.7 727.6,115.5 736.2,119.4 745.7,121.7 750.5,124.6 755.3,128 760,130.3 766.2,131 772.3,133.5 778.5,135.9 784.7,138.4 789,142.1 795,146.8 806.6,160.1 823.9,177.5 827.4,178.6 835.5,186.1 843.6,190.8 851.7,196.5 858.7,200.6" fill="none" stroke="#1a1aa8" stroke-width="1.4" stroke-linejoin="round"/>
<line x1="15" y1="230.5" x2="896" y2="230.5" stroke="#d3dae2"/>
<line x1="15" y1="233" x2="896" y2="233" stroke="#40c840" stroke-width="2.6"/>
<line x1="17" y1="233.7" x2="896" y2="233.7" stroke="#207a24" stroke-width="1.2" stroke-dasharray="3,3.6"/>
</g>
<rect x="896" y="220" width="48" height="21" fill="#ffffff"/>
<text x="904.5" y="234.5" font-size="11" fill="#454a52">0.9054</text>
<text x="16.5" y="48" font-size="11" fill="#1414e6" textLength="133.5" lengthAdjust="spacingAndGlyphs">Exponential_Moving_Average</text>
<text x="154.7" y="48" font-size="11" fill="#e01e1e" textLength="133.5" lengthAdjust="spacingAndGlyphs">Exponential_Moving_Average</text>
<rect x="14" y="36" width="31" height="22" fill="#f1efeb"/>
<rect x="14" y="36" width="31" height="5" fill="#d1cdc9"/>
<rect x="18.5" y="44.5" width="9.5" height="9.5" rx="1.5" fill="url(#lr)" stroke="#a0141c" stroke-width="0.8"/>
<rect x="31.5" y="44.5" width="9.5" height="9.5" rx="1.5" fill="url(#lb)" stroke="#1a5a8a" stroke-width="0.8"/>
<g clip-path="url(#cmacd)">
<rect x="16.5" y="309" width="2" height="3.78" fill="#c42a30" fill-opacity="0.75"/>
<rect x="21.5" y="309" width="2" height="3.78" fill="#c42a30" fill-opacity="0.75"/>
<rect x="26.5" y="309" width="2" height="3.78" fill="#c42a30" fill-opacity="0.75"/>
<rect x="31.5" y="309" width="2" height="3.78" fill="#c42a30" fill-opacity="0.75"/>
<rect x="36.5" y="309" width="2" height="3.78" fill="#c42a30" fill-opacity="0.75"/>
<rect x="41.5" y="309" width="2" height="3.78" fill="#c42a30" fill-opacity="0.75"/>
<rect x="46.5" y="309" width="2" height="3.84" fill="#c42a30" fill-opacity="0.75"/>
<rect x="51.5" y="309" width="2" height="3.75" fill="#c42a30" fill-opacity="0.75"/>
<rect x="56.5" y="309" width="2" height="3.59" fill="#c42a30" fill-opacity="0.75"/>
<rect x="61.5" y="309" width="2" height="3.43" fill="#c42a30" fill-opacity="0.75"/>
<rect x="66.5" y="309" width="2" height="3.35" fill="#c42a30" fill-opacity="0.75"/>
<rect x="71.5" y="309" width="2" height="3.27" fill="#c42a30" fill-opacity="0.75"/>
<rect x="76.5" y="309" width="2" height="3.07" fill="#c42a30" fill-opacity="0.75"/>
<rect x="80.5" y="309" width="2" height="2.9" fill="#c42a30" fill-opacity="0.75"/>
<rect x="85.5" y="309" width="2" height="3.05" fill="#c42a30" fill-opacity="0.75"/>
<rect x="90.5" y="309" width="2" height="3.43" fill="#c42a30" fill-opacity="0.75"/>
<rect x="95.5" y="309" width="2" height="3.75" fill="#c42a30" fill-opacity="0.75"/>
<rect x="100.5" y="309" width="2" height="4.18" fill="#c42a30" fill-opacity="0.75"/>
<rect x="105.5" y="309" width="2" height="4.68" fill="#c42a30" fill-opacity="0.75"/>
<rect x="110.5" y="309" width="2" height="4.95" fill="#c42a30" fill-opacity="0.75"/>
<rect x="115.5" y="309" width="2" height="4.58" fill="#c42a30" fill-opacity="0.75"/>
<rect x="120.5" y="309" width="2" height="4.29" fill="#c42a30" fill-opacity="0.75"/>
<rect x="125.5" y="309" width="2" height="3.91" fill="#c42a30" fill-opacity="0.75"/>
<rect x="130.5" y="309" width="2" height="3.37" fill="#c42a30" fill-opacity="0.75"/>
<rect x="135.5" y="309" width="2" height="2.84" fill="#c42a30" fill-opacity="0.75"/>
<rect x="139.5" y="309" width="2" height="2.42" fill="#c42a30" fill-opacity="0.75"/>
<rect x="144.5" y="309" width="2" height="1.89" fill="#c42a30" fill-opacity="0.75"/>
<rect x="149.5" y="309" width="2" height="1.85" fill="#c42a30" fill-opacity="0.75"/>
<rect x="154.5" y="309" width="2" height="1.85" fill="#c42a30" fill-opacity="0.75"/>
<rect x="159.5" y="309" width="2" height="1.85" fill="#c42a30" fill-opacity="0.75"/>
<rect x="164.5" y="309" width="2" height="1.85" fill="#c42a30" fill-opacity="0.75"/>
<rect x="169.5" y="309" width="2" height="1.85" fill="#c42a30" fill-opacity="0.75"/>
<rect x="174.5" y="309" width="2" height="1.85" fill="#c42a30" fill-opacity="0.75"/>
<rect x="179.5" y="309" width="2" height="1.55" fill="#c42a30" fill-opacity="0.75"/>
<rect x="184.5" y="309" width="2" height="1.11" fill="#c42a30" fill-opacity="0.75"/>
<rect x="189.5" y="309" width="2" height="1" fill="#c42a30" fill-opacity="0.75"/>
<rect x="194.5" y="309" width="2" height="1" fill="#c42a30" fill-opacity="0.75"/>
<rect x="199.5" y="309" width="2" height="1" fill="#c42a30" fill-opacity="0.75"/>
<rect x="204.5" y="309" width="2" height="1.01" fill="#c42a30" fill-opacity="0.75"/>
<rect x="209.5" y="309" width="2" height="1" fill="#c42a30" fill-opacity="0.75"/>
<rect x="214.5" y="309" width="2" height="1" fill="#c42a30" fill-opacity="0.75"/>
<rect x="219.5" y="309" width="2" height="1" fill="#c42a30" fill-opacity="0.75"/>
<rect x="224.5" y="308" width="2" height="1" fill="#c42a30" fill-opacity="0.75"/>
<rect x="229.5" y="308" width="2" height="1" fill="#c42a30" fill-opacity="0.75"/>
<rect x="234.5" y="309" width="2" height="1" fill="#c42a30" fill-opacity="0.75"/>
<rect x="239.5" y="309" width="2" height="1.77" fill="#c42a30" fill-opacity="0.75"/>
<rect x="244.5" y="309" width="2" height="2.09" fill="#c42a30" fill-opacity="0.75"/>
<rect x="249.5" y="309" width="2" height="2.41" fill="#c42a30" fill-opacity="0.75"/>
<rect x="254.5" y="309" width="2" height="2.73" fill="#c42a30" fill-opacity="0.75"/>
<rect x="259.5" y="309" width="2" height="3.04" fill="#c42a30" fill-opacity="0.75"/>
<rect x="264.5" y="309" width="2" height="3.28" fill="#c42a30" fill-opacity="0.75"/>
<rect x="269.5" y="309" width="2" height="3.49" fill="#c42a30" fill-opacity="0.75"/>
<rect x="274.5" y="309" width="2" height="3.59" fill="#c42a30" fill-opacity="0.75"/>
<rect x="279.5" y="309" width="2" height="3.65" fill="#c42a30" fill-opacity="0.75"/>
<rect x="284.5" y="309" width="2" height="3.72" fill="#c42a30" fill-opacity="0.75"/>
<rect x="288.5" y="309" width="2" height="3.77" fill="#c42a30" fill-opacity="0.75"/>
<rect x="293.5" y="309" width="2" height="3.54" fill="#c42a30" fill-opacity="0.75"/>
<rect x="298.5" y="309" width="2" height="2.86" fill="#c42a30" fill-opacity="0.75"/>
<rect x="303.5" y="309" width="2" height="2.33" fill="#c42a30" fill-opacity="0.75"/>
<rect x="308.5" y="309" width="2" height="2.15" fill="#c42a30" fill-opacity="0.75"/>
<rect x="313.5" y="309" width="2" height="1.97" fill="#c42a30" fill-opacity="0.75"/>
<rect x="318.5" y="309" width="2" height="1.79" fill="#c42a30" fill-opacity="0.75"/>
<rect x="323.5" y="309" width="2" height="1.61" fill="#c42a30" fill-opacity="0.75"/>
<rect x="328.5" y="309" width="2" height="1.43" fill="#c42a30" fill-opacity="0.75"/>
<rect x="333.5" y="309" width="2" height="1.25" fill="#c42a30" fill-opacity="0.75"/>
<rect x="338.5" y="309" width="2" height="1" fill="#c42a30" fill-opacity="0.75"/>
<rect x="343.5" y="309" width="2" height="1" fill="#c42a30" fill-opacity="0.75"/>
<rect x="348.5" y="309" width="2" height="1" fill="#c42a30" fill-opacity="0.75"/>
<rect x="353.5" y="309" width="2" height="1" fill="#c42a30" fill-opacity="0.75"/>
<rect x="358.5" y="309" width="2" height="1.94" fill="#c42a30" fill-opacity="0.75"/>
<rect x="363.5" y="309" width="2" height="3.08" fill="#c42a30" fill-opacity="0.75"/>
<rect x="368.5" y="309" width="2" height="4.22" fill="#c42a30" fill-opacity="0.75"/>
<rect x="373.5" y="309" width="2" height="5.35" fill="#c42a30" fill-opacity="0.75"/>
<rect x="377.5" y="309" width="2" height="5.95" fill="#c42a30" fill-opacity="0.75"/>
<rect x="382.5" y="309" width="2" height="6.48" fill="#c42a30" fill-opacity="0.75"/>
<rect x="387.5" y="309" width="2" height="7.02" fill="#c42a30" fill-opacity="0.75"/>
<rect x="392.5" y="309" width="2" height="7.03" fill="#c42a30" fill-opacity="0.75"/>
<rect x="397.5" y="309" width="2" height="6.7" fill="#c42a30" fill-opacity="0.75"/>
<rect x="402.5" y="309" width="2" height="6.41" fill="#c42a30" fill-opacity="0.75"/>
<rect x="407.5" y="309" width="2" height="6.11" fill="#c42a30" fill-opacity="0.75"/>
<rect x="412.5" y="309" width="2" height="5.82" fill="#c42a30" fill-opacity="0.75"/>
<rect x="417.5" y="309" width="2" height="5.46" fill="#c42a30" fill-opacity="0.75"/>
<rect x="422.5" y="309" width="2" height="4.85" fill="#c42a30" fill-opacity="0.75"/>
<rect x="427.5" y="309" width="2" height="4.25" fill="#c42a30" fill-opacity="0.75"/>
<rect x="432.5" y="309" width="2" height="3.64" fill="#c42a30" fill-opacity="0.75"/>
<rect x="437.5" y="309" width="2" height="3.03" fill="#c42a30" fill-opacity="0.75"/>
<rect x="442.5" y="309" width="2" height="2.87" fill="#c42a30" fill-opacity="0.75"/>
<rect x="447.5" y="309" width="2" height="2.71" fill="#c42a30" fill-opacity="0.75"/>
<rect x="452.5" y="309" width="2" height="1.49" fill="#c42a30" fill-opacity="0.75"/>
<rect x="457.5" y="309" width="2" height="1" fill="#c42a30" fill-opacity="0.75"/>
<rect x="462.5" y="308" width="2" height="1" fill="#c42a30" fill-opacity="0.75"/>
<rect x="467.5" y="308" width="2" height="1" fill="#c42a30" fill-opacity="0.75"/>
<rect x="472.5" y="308" width="2" height="1" fill="#c42a30" fill-opacity="0.75"/>
<rect x="477.5" y="308" width="2" height="1" fill="#c42a30" fill-opacity="0.75"/>
<rect x="482.5" y="309" width="2" height="1" fill="#c42a30" fill-opacity="0.75"/>
<rect x="487.5" y="309" width="2" height="1" fill="#c42a30" fill-opacity="0.75"/>
<rect x="492.5" y="309" width="2" height="1.1" fill="#c42a30" fill-opacity="0.75"/>
<rect x="496.5" y="309" width="2" height="1.4" fill="#c42a30" fill-opacity="0.75"/>
<rect x="501.5" y="309" width="2" height="1.76" fill="#c42a30" fill-opacity="0.75"/>
<rect x="506.5" y="309" width="2" height="2.01" fill="#c42a30" fill-opacity="0.75"/>
<rect x="511.5" y="309" width="2" height="2.22" fill="#c42a30" fill-opacity="0.75"/>
<rect x="516.5" y="309" width="2" height="1.78" fill="#c42a30" fill-opacity="0.75"/>
<rect x="521.5" y="309" width="2" height="1.34" fill="#c42a30" fill-opacity="0.75"/>
<rect x="526.5" y="309" width="2" height="1" fill="#c42a30" fill-opacity="0.75"/>
<rect x="531.5" y="309" width="2" height="1" fill="#c42a30" fill-opacity="0.75"/>
<rect x="536.5" y="308" width="2" height="1" fill="#c42a30" fill-opacity="0.75"/>
<rect x="541.5" y="307.72" width="2" height="1.28" fill="#c42a30" fill-opacity="0.75"/>
<rect x="546.5" y="307.37" width="2" height="1.63" fill="#c42a30" fill-opacity="0.75"/>
<rect x="551.5" y="307.15" width="2" height="1.85" fill="#c42a30" fill-opacity="0.75"/>
<rect x="556.5" y="307.77" width="2" height="1.23" fill="#c42a30" fill-opacity="0.75"/>
<rect x="561.5" y="308" width="2" height="1" fill="#c42a30" fill-opacity="0.75"/>
<rect x="566.5" y="309" width="2" height="1" fill="#c42a30" fill-opacity="0.75"/>
<rect x="571.5" y="309" width="2" height="1" fill="#c42a30" fill-opacity="0.75"/>
<rect x="576.5" y="309" width="2" height="1" fill="#c42a30" fill-opacity="0.75"/>
<rect x="581.5" y="308" width="2" height="1" fill="#c42a30" fill-opacity="0.75"/>
<rect x="585.5" y="308" width="2" height="1" fill="#c42a30" fill-opacity="0.75"/>
<rect x="590.5" y="308" width="2" height="1" fill="#c42a30" fill-opacity="0.75"/>
<rect x="595.5" y="308" width="2" height="1" fill="#c42a30" fill-opacity="0.75"/>
<rect x="600.5" y="308" width="2" height="1" fill="#c42a30" fill-opacity="0.75"/>
<rect x="605.5" y="308" width="2" height="1" fill="#c42a30" fill-opacity="0.75"/>
<rect x="610.5" y="308" width="2" height="1" fill="#c42a30" fill-opacity="0.75"/>
<rect x="615.5" y="309" width="2" height="1" fill="#c42a30" fill-opacity="0.75"/>
<rect x="620.5" y="308" width="2" height="1" fill="#c42a30" fill-opacity="0.75"/>
<rect x="625.5" y="308" width="2" height="1" fill="#c42a30" fill-opacity="0.75"/>
<rect x="630.5" y="307.86" width="2" height="1.14" fill="#c42a30" fill-opacity="0.75"/>
<rect x="635.5" y="308" width="2" height="1" fill="#c42a30" fill-opacity="0.75"/>
<rect x="640.5" y="309" width="2" height="1" fill="#c42a30" fill-opacity="0.75"/>
<rect x="645.5" y="309" width="2" height="1" fill="#c42a30" fill-opacity="0.75"/>
<rect x="650.5" y="309" width="2" height="1.42" fill="#c42a30" fill-opacity="0.75"/>
<rect x="655.5" y="309" width="2" height="1.64" fill="#c42a30" fill-opacity="0.75"/>
<rect x="660.5" y="309" width="2" height="1.6" fill="#c42a30" fill-opacity="0.75"/>
<rect x="665.5" y="309" width="2" height="1.56" fill="#c42a30" fill-opacity="0.75"/>
<rect x="670.5" y="309" width="2" height="1.63" fill="#c42a30" fill-opacity="0.75"/>
<rect x="675.5" y="309" width="2" height="1.78" fill="#c42a30" fill-opacity="0.75"/>
<rect x="680.5" y="309" width="2" height="1.69" fill="#c42a30" fill-opacity="0.75"/>
<rect x="685.5" y="309" width="2" height="1.4" fill="#c42a30" fill-opacity="0.75"/>
<rect x="690.5" y="309" width="2" height="1.11" fill="#c42a30" fill-opacity="0.75"/>
<rect x="695.5" y="309" width="2" height="1" fill="#c42a30" fill-opacity="0.75"/>
<rect x="700.5" y="309" width="2" height="1" fill="#c42a30" fill-opacity="0.75"/>
<rect x="704.5" y="309" width="2" height="1" fill="#c42a30" fill-opacity="0.75"/>
<rect x="709.5" y="309" width="2" height="1.32" fill="#c42a30" fill-opacity="0.75"/>
<rect x="714.5" y="309" width="2" height="1.58" fill="#c42a30" fill-opacity="0.75"/>
<rect x="719.5" y="309" width="2" height="1.85" fill="#c42a30" fill-opacity="0.75"/>
<rect x="724.5" y="309" width="2" height="2.23" fill="#c42a30" fill-opacity="0.75"/>
<rect x="729.5" y="309" width="2" height="2.64" fill="#c42a30" fill-opacity="0.75"/>
<rect x="734.5" y="309" width="2" height="3.03" fill="#c42a30" fill-opacity="0.75"/>
<rect x="739.5" y="309" width="2" height="3.12" fill="#c42a30" fill-opacity="0.75"/>
<rect x="744.5" y="309" width="2" height="3.27" fill="#c42a30" fill-opacity="0.75"/>
<rect x="749.5" y="309" width="2" height="3.51" fill="#c42a30" fill-opacity="0.75"/>
<rect x="754.5" y="309" width="2" height="3.75" fill="#c42a30" fill-opacity="0.75"/>
<rect x="759.5" y="309" width="2" height="3.74" fill="#c42a30" fill-opacity="0.75"/>
<rect x="764.5" y="309" width="2" height="3.51" fill="#c42a30" fill-opacity="0.75"/>
<rect x="769.5" y="309" width="2" height="3.27" fill="#c42a30" fill-opacity="0.75"/>
<rect x="774.5" y="309" width="2" height="3.04" fill="#c42a30" fill-opacity="0.75"/>
<rect x="779.5" y="309" width="2" height="2.64" fill="#c42a30" fill-opacity="0.75"/>
<rect x="784.5" y="309" width="2" height="2.8" fill="#c42a30" fill-opacity="0.75"/>
<rect x="789.5" y="309" width="2" height="3.35" fill="#c42a30" fill-opacity="0.75"/>
<rect x="793.5" y="309" width="2" height="3.79" fill="#c42a30" fill-opacity="0.75"/>
<rect x="798.5" y="309" width="2" height="4.28" fill="#c42a30" fill-opacity="0.75"/>
<rect x="803.5" y="309" width="2" height="4.73" fill="#c42a30" fill-opacity="0.75"/>
<rect x="808.5" y="309" width="2" height="5.17" fill="#c42a30" fill-opacity="0.75"/>
<rect x="813.5" y="309" width="2" height="5.62" fill="#c42a30" fill-opacity="0.75"/>
<rect x="818.5" y="309" width="2" height="6.08" fill="#c42a30" fill-opacity="0.75"/>
<rect x="823.5" y="309" width="2" height="6.25" fill="#c42a30" fill-opacity="0.75"/>
<rect x="828.5" y="309" width="2" height="6.16" fill="#c42a30" fill-opacity="0.75"/>
<rect x="833.5" y="309" width="2" height="6.04" fill="#c42a30" fill-opacity="0.75"/>
<rect x="838.5" y="309" width="2" height="5.51" fill="#c42a30" fill-opacity="0.75"/>
<rect x="843.5" y="309" width="2" height="4.98" fill="#c42a30" fill-opacity="0.75"/>
<rect x="848.5" y="309" width="2" height="4.57" fill="#c42a30" fill-opacity="0.75"/>
<rect x="853.5" y="309" width="2" height="4.5" fill="#c42a30" fill-opacity="0.75"/>
<rect x="858.5" y="309" width="2" height="4.15" fill="#c42a30" fill-opacity="0.75"/>
<polyline points="47.5,272.5 72.5,276.7 93.3,280.8 112,285 126.7,287 145.4,289.2 187,289.2 208,287 239,286 271,290.2 302.5,295.4 333.75,297.1 358.75,297.5 375.4,301.7 396,308 417,314.2 438,317.3 458.75,318.3 480,316.7 511.7,315.8 543,314.2 563.75,310 595,309 626,305.8 647,305.4 668,306.25 710,306.25 720.8,306.5 743.4,309.5 778,313 795.5,316.4 821.5,321.6 847.6,327.7 860.6,329.4" fill="none" stroke="#a02028" stroke-width="0.8" />
<polyline points="46.5,276.7 62,278.75 83,281.9 97.5,286 110,290.2 124.6,291.25 176.7,291.25 197.5,289.2 228.75,286 240,288.1 260.8,292.3 292,297.9 333.75,298.5 354.6,297.5 375.4,308 390,314.2 417,320.4 448.3,320.8 458.75,318.3 470,316.25 501,318 511.7,318.3 532.5,315.2 553.3,310 574,310 615.8,306.9 632.5,304.2 653.3,307.5 678.3,308.3 700,306.9 720.8,308.6 734.7,311.7 757.3,315.2 781.6,316.4 795.5,320.8 821.5,328.6 833.7,331.2 856.25,333.8 859,333.8" fill="none" stroke="#14146e" stroke-width="1.6" stroke-linejoin="round"/>
<circle cx="47.5" cy="272.5" r="1.55" fill="#ea262c"/>
<circle cx="52.5" cy="273.34" r="1.55" fill="#ea262c"/>
<circle cx="57.5" cy="274.18" r="1.55" fill="#ea262c"/>
<circle cx="62.5" cy="275.02" r="1.55" fill="#ea262c"/>
<circle cx="67.5" cy="275.86" r="1.55" fill="#ea262c"/>
<circle cx="72.5" cy="276.7" r="1.55" fill="#ea262c"/>
<circle cx="77.5" cy="277.69" r="1.55" fill="#ea262c"/>
<circle cx="81.5" cy="278.47" r="1.55" fill="#ea262c"/>
<circle cx="86.5" cy="279.46" r="1.55" fill="#ea262c"/>
<circle cx="91.5" cy="280.45" r="1.55" fill="#ea262c"/>
<circle cx="96.5" cy="281.52" r="1.55" fill="#ea262c"/>
<circle cx="101.5" cy="282.64" r="1.55" fill="#ea262c"/>
<circle cx="106.5" cy="283.76" r="1.55" fill="#ea262c"/>
<circle cx="111.5" cy="284.89" r="1.55" fill="#ea262c"/>
<circle cx="116.5" cy="285.61" r="1.55" fill="#ea262c"/>
<circle cx="121.5" cy="286.29" r="1.55" fill="#ea262c"/>
<circle cx="126.5" cy="286.97" r="1.55" fill="#ea262c"/>
<circle cx="131.5" cy="287.56" r="1.55" fill="#ea262c"/>
<circle cx="136.5" cy="288.15" r="1.55" fill="#ea262c"/>
<circle cx="140.5" cy="288.62" r="1.55" fill="#ea262c"/>
<circle cx="145.5" cy="289.2" r="1.55" fill="#ea262c"/>
<circle cx="150.5" cy="289.2" r="1.55" fill="#ea262c"/>
<circle cx="155.5" cy="289.2" r="1.55" fill="#ea262c"/>
<circle cx="160.5" cy="289.2" r="1.55" fill="#ea262c"/>
<circle cx="165.5" cy="289.2" r="1.55" fill="#ea262c"/>
<circle cx="170.5" cy="289.2" r="1.55" fill="#ea262c"/>
<circle cx="175.5" cy="289.2" r="1.55" fill="#ea262c"/>
<circle cx="180.5" cy="289.2" r="1.55" fill="#ea262c"/>
<circle cx="185.5" cy="289.2" r="1.55" fill="#ea262c"/>
<circle cx="190.5" cy="288.83" r="1.55" fill="#ea262c"/>
<circle cx="195.5" cy="288.31" r="1.55" fill="#ea262c"/>
<circle cx="200.5" cy="287.79" r="1.55" fill="#ea262c"/>
<circle cx="205.5" cy="287.26" r="1.55" fill="#ea262c"/>
<circle cx="210.5" cy="286.92" r="1.55" fill="#ea262c"/>
<circle cx="215.5" cy="286.76" r="1.55" fill="#ea262c"/>
<circle cx="220.5" cy="286.6" r="1.55" fill="#ea262c"/>
<circle cx="225.5" cy="286.44" r="1.55" fill="#ea262c"/>
<circle cx="230.5" cy="286.27" r="1.55" fill="#ea262c"/>
<circle cx="235.5" cy="286.11" r="1.55" fill="#ea262c"/>
<circle cx="240.5" cy="286.2" r="1.55" fill="#ea262c"/>
<circle cx="245.5" cy="286.85" r="1.55" fill="#ea262c"/>
<circle cx="250.5" cy="287.51" r="1.55" fill="#ea262c"/>
<circle cx="255.5" cy="288.17" r="1.55" fill="#ea262c"/>
<circle cx="260.5" cy="288.82" r="1.55" fill="#ea262c"/>
<circle cx="265.5" cy="289.48" r="1.55" fill="#ea262c"/>
<circle cx="270.5" cy="290.13" r="1.55" fill="#ea262c"/>
<circle cx="275.5" cy="290.94" r="1.55" fill="#ea262c"/>
<circle cx="280.5" cy="291.77" r="1.55" fill="#ea262c"/>
<circle cx="285.5" cy="292.59" r="1.55" fill="#ea262c"/>
<circle cx="289.5" cy="293.25" r="1.55" fill="#ea262c"/>
<circle cx="294.5" cy="294.08" r="1.55" fill="#ea262c"/>
<circle cx="299.5" cy="294.9" r="1.55" fill="#ea262c"/>
<circle cx="304.5" cy="295.51" r="1.55" fill="#ea262c"/>
<circle cx="309.5" cy="295.78" r="1.55" fill="#ea262c"/>
<circle cx="314.5" cy="296.05" r="1.55" fill="#ea262c"/>
<circle cx="319.5" cy="296.32" r="1.55" fill="#ea262c"/>
<circle cx="324.5" cy="296.6" r="1.55" fill="#ea262c"/>
<circle cx="329.5" cy="296.87" r="1.55" fill="#ea262c"/>
<circle cx="334.5" cy="297.11" r="1.55" fill="#ea262c"/>
<circle cx="339.5" cy="297.19" r="1.55" fill="#ea262c"/>
<circle cx="344.5" cy="297.27" r="1.55" fill="#ea262c"/>
<circle cx="349.5" cy="297.35" r="1.55" fill="#ea262c"/>
<circle cx="354.5" cy="297.43" r="1.55" fill="#ea262c"/>
<circle cx="359.5" cy="297.69" r="1.55" fill="#ea262c"/>
<circle cx="364.5" cy="298.95" r="1.55" fill="#ea262c"/>
<circle cx="369.5" cy="300.21" r="1.55" fill="#ea262c"/>
<circle cx="374.5" cy="301.47" r="1.55" fill="#ea262c"/>
<circle cx="378.5" cy="302.65" r="1.55" fill="#ea262c"/>
<circle cx="383.5" cy="304.18" r="1.55" fill="#ea262c"/>
<circle cx="388.5" cy="305.71" r="1.55" fill="#ea262c"/>
<circle cx="393.5" cy="307.24" r="1.55" fill="#ea262c"/>
<circle cx="398.5" cy="308.74" r="1.55" fill="#ea262c"/>
<circle cx="403.5" cy="310.21" r="1.55" fill="#ea262c"/>
<circle cx="408.5" cy="311.69" r="1.55" fill="#ea262c"/>
<circle cx="413.5" cy="313.17" r="1.55" fill="#ea262c"/>
<circle cx="418.5" cy="314.42" r="1.55" fill="#ea262c"/>
<circle cx="423.5" cy="315.16" r="1.55" fill="#ea262c"/>
<circle cx="428.5" cy="315.9" r="1.55" fill="#ea262c"/>
<circle cx="433.5" cy="316.64" r="1.55" fill="#ea262c"/>
<circle cx="438.5" cy="317.32" r="1.55" fill="#ea262c"/>
<circle cx="443.5" cy="317.57" r="1.55" fill="#ea262c"/>
<circle cx="448.5" cy="317.81" r="1.55" fill="#ea262c"/>
<circle cx="453.5" cy="318.05" r="1.55" fill="#ea262c"/>
<circle cx="458.5" cy="318.29" r="1.55" fill="#ea262c"/>
<circle cx="463.5" cy="317.94" r="1.55" fill="#ea262c"/>
<circle cx="468.5" cy="317.57" r="1.55" fill="#ea262c"/>
<circle cx="473.5" cy="317.19" r="1.55" fill="#ea262c"/>
<circle cx="478.5" cy="316.81" r="1.55" fill="#ea262c"/>
<circle cx="483.5" cy="316.6" r="1.55" fill="#ea262c"/>
<circle cx="488.5" cy="316.46" r="1.55" fill="#ea262c"/>
<circle cx="493.5" cy="316.32" r="1.55" fill="#ea262c"/>
<circle cx="497.5" cy="316.2" r="1.55" fill="#ea262c"/>
<circle cx="502.5" cy="316.06" r="1.55" fill="#ea262c"/>
<circle cx="507.5" cy="315.92" r="1.55" fill="#ea262c"/>
<circle cx="512.5" cy="315.76" r="1.55" fill="#ea262c"/>
<circle cx="517.5" cy="315.5" r="1.55" fill="#ea262c"/>
<circle cx="522.5" cy="315.25" r="1.55" fill="#ea262c"/>
<circle cx="527.5" cy="314.99" r="1.55" fill="#ea262c"/>
<circle cx="532.5" cy="314.74" r="1.55" fill="#ea262c"/>
<circle cx="537.5" cy="314.48" r="1.55" fill="#ea262c"/>
<circle cx="542.5" cy="314.23" r="1.55" fill="#ea262c"/>
<circle cx="547.5" cy="313.29" r="1.55" fill="#ea262c"/>
<circle cx="552.5" cy="312.28" r="1.55" fill="#ea262c"/>
<circle cx="557.5" cy="311.27" r="1.55" fill="#ea262c"/>
<circle cx="562.5" cy="310.25" r="1.55" fill="#ea262c"/>
<circle cx="567.5" cy="309.88" r="1.55" fill="#ea262c"/>
<circle cx="572.5" cy="309.72" r="1.55" fill="#ea262c"/>
<circle cx="577.5" cy="309.56" r="1.55" fill="#ea262c"/>
<circle cx="582.5" cy="309.4" r="1.55" fill="#ea262c"/>
<circle cx="586.5" cy="309.27" r="1.55" fill="#ea262c"/>
<circle cx="591.5" cy="309.11" r="1.55" fill="#ea262c"/>
<circle cx="596.5" cy="308.85" r="1.55" fill="#ea262c"/>
<circle cx="601.5" cy="308.33" r="1.55" fill="#ea262c"/>
<circle cx="606.5" cy="307.81" r="1.55" fill="#ea262c"/>
<circle cx="611.5" cy="307.3" r="1.55" fill="#ea262c"/>
<circle cx="616.5" cy="306.78" r="1.55" fill="#ea262c"/>
<circle cx="621.5" cy="306.26" r="1.55" fill="#ea262c"/>
<circle cx="626.5" cy="305.79" r="1.55" fill="#ea262c"/>
<circle cx="631.5" cy="305.7" r="1.55" fill="#ea262c"/>
<circle cx="636.5" cy="305.6" r="1.55" fill="#ea262c"/>
<circle cx="641.5" cy="305.5" r="1.55" fill="#ea262c"/>
<circle cx="646.5" cy="305.41" r="1.55" fill="#ea262c"/>
<circle cx="651.5" cy="305.58" r="1.55" fill="#ea262c"/>
<circle cx="656.5" cy="305.78" r="1.55" fill="#ea262c"/>
<circle cx="661.5" cy="305.99" r="1.55" fill="#ea262c"/>
<circle cx="666.5" cy="306.19" r="1.55" fill="#ea262c"/>
<circle cx="671.5" cy="306.25" r="1.55" fill="#ea262c"/>
<circle cx="676.5" cy="306.25" r="1.55" fill="#ea262c"/>
<circle cx="681.5" cy="306.25" r="1.55" fill="#ea262c"/>
<circle cx="686.5" cy="306.25" r="1.55" fill="#ea262c"/>
<circle cx="691.5" cy="306.25" r="1.55" fill="#ea262c"/>
<circle cx="696.5" cy="306.25" r="1.55" fill="#ea262c"/>
<circle cx="701.5" cy="306.25" r="1.55" fill="#ea262c"/>
<circle cx="705.5" cy="306.25" r="1.55" fill="#ea262c"/>
<circle cx="710.5" cy="306.26" r="1.55" fill="#ea262c"/>
<circle cx="715.5" cy="306.38" r="1.55" fill="#ea262c"/>
<circle cx="720.5" cy="306.49" r="1.55" fill="#ea262c"/>
<circle cx="725.5" cy="307.12" r="1.55" fill="#ea262c"/>
<circle cx="730.5" cy="307.79" r="1.55" fill="#ea262c"/>
<circle cx="735.5" cy="308.45" r="1.55" fill="#ea262c"/>
<circle cx="740.5" cy="309.12" r="1.55" fill="#ea262c"/>
<circle cx="745.5" cy="309.71" r="1.55" fill="#ea262c"/>
<circle cx="750.5" cy="310.22" r="1.55" fill="#ea262c"/>
<circle cx="755.5" cy="310.72" r="1.55" fill="#ea262c"/>
<circle cx="760.5" cy="311.23" r="1.55" fill="#ea262c"/>
<circle cx="765.5" cy="311.74" r="1.55" fill="#ea262c"/>
<circle cx="770.5" cy="312.24" r="1.55" fill="#ea262c"/>
<circle cx="775.5" cy="312.75" r="1.55" fill="#ea262c"/>
<circle cx="780.5" cy="313.49" r="1.55" fill="#ea262c"/>
<circle cx="785.5" cy="314.46" r="1.55" fill="#ea262c"/>
<circle cx="790.5" cy="315.43" r="1.55" fill="#ea262c"/>
<circle cx="794.5" cy="316.21" r="1.55" fill="#ea262c"/>
<circle cx="799.5" cy="317.2" r="1.55" fill="#ea262c"/>
<circle cx="804.5" cy="318.2" r="1.55" fill="#ea262c"/>
<circle cx="809.5" cy="319.2" r="1.55" fill="#ea262c"/>
<circle cx="814.5" cy="320.2" r="1.55" fill="#ea262c"/>
<circle cx="819.5" cy="321.2" r="1.55" fill="#ea262c"/>
<circle cx="824.5" cy="322.3" r="1.55" fill="#ea262c"/>
<circle cx="829.5" cy="323.47" r="1.55" fill="#ea262c"/>
<circle cx="834.5" cy="324.64" r="1.55" fill="#ea262c"/>
<circle cx="839.5" cy="325.81" r="1.55" fill="#ea262c"/>
<circle cx="844.5" cy="326.98" r="1.55" fill="#ea262c"/>
<circle cx="849.5" cy="327.95" r="1.55" fill="#ea262c"/>
<circle cx="854.5" cy="328.6" r="1.55" fill="#ea262c"/>
<circle cx="859.5" cy="329.26" r="1.55" fill="#ea262c"/>
</g>
<rect x="15" y="267" width="30" height="13" fill="#3a414a"/>
<text x="16.2" y="278" font-size="11" fill="#1a1a7a" textLength="28" lengthAdjust="spacingAndGlyphs">MACD</text>
<g clip-path="url(#crsi)">
<polygon points="14.5,399 14.5,362 14.6,360.7 16.8,362.5 26.7,357.3 37.5,368.4 43.3,363.2 45.8,364.4 52.6,364.4 57.5,360.4 60,360.1 61,358.8 66.25,369.25 71.5,365.5 76.7,368.2 83,368.8 95.4,375.5 101.7,370.3 106.9,374.5 116.25,364.7 121.5,368.8 126.7,359.9 133,363 143.3,359.9 151.7,357.8 156.9,351.5 161,360.9 174.6,358.8 187,349.5 191.25,346.3 195.4,348.4 199.6,347.4 210,345.3 215.2,358.8 220.4,354.25 227.7,354.7 234,353 240.2,353 244.2,369.25 251.5,375.5 258.75,374.5 262.9,372.4 273.3,375.5 283.75,370.3 294.2,377.2 300.4,366.1 309.8,361.5 319.2,363.4 329.6,369.25 340,358.8 348.3,358.4 353.5,360.9 358.75,390 367,394.7 377.5,394.7 383.75,391.75 390,393.8 396.25,394.7 404.6,396.3 412.9,390.5 419.2,389.7 428.5,384.25 439,388 448.3,380.7 452.9,360.5 458.3,370.9 464,365 469.2,364.7 473.3,367.6 477.5,364.7 486.7,380.7 490.8,382.2 500.2,381.75 507,388 512.7,365 517.9,363.4 523.1,367.6 532.5,365 541.9,360.5 548.1,363.4 552.3,362 557.5,364.7 562.7,364 566.9,357.8 577.3,371.75 586.7,369.25 596,369.25 602.3,358.8 607.5,357.4 615.8,358.4 626.25,360.5 631.5,357.8 636.7,375.5 645,376.5 651.25,378.6 657.5,376.5 661.7,377.2 666.9,366.1 672,370.3 676.25,369.7 684.6,363.4 690.8,366.1 696,363.4 700.2,370.3 706,367.9 715.6,376.2 720.8,370.1 726,384.5 730.4,383.1 734.7,385.2 745.1,374.5 750.3,384.5 755.6,387.5 764.2,379.3 769.4,378.3 775.5,384 780.7,374.5 788.5,388.7 794.6,389.2 802.4,392.2 811.1,395 814.6,396.7 824.1,397 828.5,393.9 833.7,396.2 838.9,389.2 844.1,389.2 849.3,392.7 853.6,388.3 859,386 859,399" fill="url(#rsif)"/>
<polyline clip-path="url(#rsimid)" points="14.5,362 14.6,360.7 16.8,362.5 26.7,357.3 37.5,368.4 43.3,363.2 45.8,364.4 52.6,364.4 57.5,360.4 60,360.1 61,358.8 66.25,369.25 71.5,365.5 76.7,368.2 83,368.8 95.4,375.5 101.7,370.3 106.9,374.5 116.25,364.7 121.5,368.8 126.7,359.9 133,363 143.3,359.9 151.7,357.8 156.9,351.5 161,360.9 174.6,358.8 187,349.5 191.25,346.3 195.4,348.4 199.6,347.4 210,345.3 215.2,358.8 220.4,354.25 227.7,354.7 234,353 240.2,353 244.2,369.25 251.5,375.5 258.75,374.5 262.9,372.4 273.3,375.5 283.75,370.3 294.2,377.2 300.4,366.1 309.8,361.5 319.2,363.4 329.6,369.25 340,358.8 348.3,358.4 353.5,360.9 358.75,390 367,394.7 377.5,394.7 383.75,391.75 390,393.8 396.25,394.7 404.6,396.3 412.9,390.5 419.2,389.7 428.5,384.25 439,388 448.3,380.7 452.9,360.5 458.3,370.9 464,365 469.2,364.7 473.3,367.6 477.5,364.7 486.7,380.7 490.8,382.2 500.2,381.75 507,388 512.7,365 517.9,363.4 523.1,367.6 532.5,365 541.9,360.5 548.1,363.4 552.3,362 557.5,364.7 562.7,364 566.9,357.8 577.3,371.75 586.7,369.25 596,369.25 602.3,358.8 607.5,357.4 615.8,358.4 626.25,360.5 631.5,357.8 636.7,375.5 645,376.5 651.25,378.6 657.5,376.5 661.7,377.2 666.9,366.1 672,370.3 676.25,369.7 684.6,363.4 690.8,366.1 696,363.4 700.2,370.3 706,367.9 715.6,376.2 720.8,370.1 726,384.5 730.4,383.1 734.7,385.2 745.1,374.5 750.3,384.5 755.6,387.5 764.2,379.3 769.4,378.3 775.5,384 780.7,374.5 788.5,388.7 794.6,389.2 802.4,392.2 811.1,395 814.6,396.7 824.1,397 828.5,393.9 833.7,396.2 838.9,389.2 844.1,389.2 849.3,392.7 853.6,388.3 859,386" fill="none" stroke="#f08c32" stroke-width="1" stroke-linejoin="round"/>
<polyline clip-path="url(#rsitop)" points="14.5,362 14.6,360.7 16.8,362.5 26.7,357.3 37.5,368.4 43.3,363.2 45.8,364.4 52.6,364.4 57.5,360.4 60,360.1 61,358.8 66.25,369.25 71.5,365.5 76.7,368.2 83,368.8 95.4,375.5 101.7,370.3 106.9,374.5 116.25,364.7 121.5,368.8 126.7,359.9 133,363 143.3,359.9 151.7,357.8 156.9,351.5 161,360.9 174.6,358.8 187,349.5 191.25,346.3 195.4,348.4 199.6,347.4 210,345.3 215.2,358.8 220.4,354.25 227.7,354.7 234,353 240.2,353 244.2,369.25 251.5,375.5 258.75,374.5 262.9,372.4 273.3,375.5 283.75,370.3 294.2,377.2 300.4,366.1 309.8,361.5 319.2,363.4 329.6,369.25 340,358.8 348.3,358.4 353.5,360.9 358.75,390 367,394.7 377.5,394.7 383.75,391.75 390,393.8 396.25,394.7 404.6,396.3 412.9,390.5 419.2,389.7 428.5,384.25 439,388 448.3,380.7 452.9,360.5 458.3,370.9 464,365 469.2,364.7 473.3,367.6 477.5,364.7 486.7,380.7 490.8,382.2 500.2,381.75 507,388 512.7,365 517.9,363.4 523.1,367.6 532.5,365 541.9,360.5 548.1,363.4 552.3,362 557.5,364.7 562.7,364 566.9,357.8 577.3,371.75 586.7,369.25 596,369.25 602.3,358.8 607.5,357.4 615.8,358.4 626.25,360.5 631.5,357.8 636.7,375.5 645,376.5 651.25,378.6 657.5,376.5 661.7,377.2 666.9,366.1 672,370.3 676.25,369.7 684.6,363.4 690.8,366.1 696,363.4 700.2,370.3 706,367.9 715.6,376.2 720.8,370.1 726,384.5 730.4,383.1 734.7,385.2 745.1,374.5 750.3,384.5 755.6,387.5 764.2,379.3 769.4,378.3 775.5,384 780.7,374.5 788.5,388.7 794.6,389.2 802.4,392.2 811.1,395 814.6,396.7 824.1,397 828.5,393.9 833.7,396.2 838.9,389.2 844.1,389.2 849.3,392.7 853.6,388.3 859,386" fill="none" stroke="#d64ad0" stroke-width="1" stroke-linejoin="round"/>
<polyline clip-path="url(#rsibot)" points="14.5,362 14.6,360.7 16.8,362.5 26.7,357.3 37.5,368.4 43.3,363.2 45.8,364.4 52.6,364.4 57.5,360.4 60,360.1 61,358.8 66.25,369.25 71.5,365.5 76.7,368.2 83,368.8 95.4,375.5 101.7,370.3 106.9,374.5 116.25,364.7 121.5,368.8 126.7,359.9 133,363 143.3,359.9 151.7,357.8 156.9,351.5 161,360.9 174.6,358.8 187,349.5 191.25,346.3 195.4,348.4 199.6,347.4 210,345.3 215.2,358.8 220.4,354.25 227.7,354.7 234,353 240.2,353 244.2,369.25 251.5,375.5 258.75,374.5 262.9,372.4 273.3,375.5 283.75,370.3 294.2,377.2 300.4,366.1 309.8,361.5 319.2,363.4 329.6,369.25 340,358.8 348.3,358.4 353.5,360.9 358.75,390 367,394.7 377.5,394.7 383.75,391.75 390,393.8 396.25,394.7 404.6,396.3 412.9,390.5 419.2,389.7 428.5,384.25 439,388 448.3,380.7 452.9,360.5 458.3,370.9 464,365 469.2,364.7 473.3,367.6 477.5,364.7 486.7,380.7 490.8,382.2 500.2,381.75 507,388 512.7,365 517.9,363.4 523.1,367.6 532.5,365 541.9,360.5 548.1,363.4 552.3,362 557.5,364.7 562.7,364 566.9,357.8 577.3,371.75 586.7,369.25 596,369.25 602.3,358.8 607.5,357.4 615.8,358.4 626.25,360.5 631.5,357.8 636.7,375.5 645,376.5 651.25,378.6 657.5,376.5 661.7,377.2 666.9,366.1 672,370.3 676.25,369.7 684.6,363.4 690.8,366.1 696,363.4 700.2,370.3 706,367.9 715.6,376.2 720.8,370.1 726,384.5 730.4,383.1 734.7,385.2 745.1,374.5 750.3,384.5 755.6,387.5 764.2,379.3 769.4,378.3 775.5,384 780.7,374.5 788.5,388.7 794.6,389.2 802.4,392.2 811.1,395 814.6,396.7 824.1,397 828.5,393.9 833.7,396.2 838.9,389.2 844.1,389.2 849.3,392.7 853.6,388.3 859,386" fill="none" stroke="#3cc43c" stroke-width="1" stroke-linejoin="round"/>
<line x1="15" y1="347" x2="859" y2="347" stroke="#1e1ea0" stroke-width="2"/>
<line x1="15" y1="393" x2="859" y2="393" stroke="#1e1ea0" stroke-width="2"/>
</g>
<rect x="15" y="343" width="17" height="12" fill="#3a414a"/>
<text x="16.2" y="354" font-size="11" fill="#e8863a" textLength="15" lengthAdjust="spacingAndGlyphs">RSI</text>
<line x1="22.5" y1="399.5" x2="22.5" y2="403" stroke="#b9c6d3"/>
<text x="22.0" y="422" font-size="10.6" fill="#f4f4f4" text-anchor="middle">23</text>
<line x1="52.5" y1="399.5" x2="52.5" y2="403" stroke="#b9c6d3"/>
<text x="52.0" y="422" font-size="10.6" fill="#f4f4f4" text-anchor="middle">24</text>
<line x1="81.5" y1="399.5" x2="81.5" y2="403" stroke="#b9c6d3"/>
<text x="81.0" y="422" font-size="10.6" fill="#f4f4f4" text-anchor="middle">25</text>
<line x1="111.5" y1="399.5" x2="111.5" y2="403" stroke="#b9c6d3"/>
<text x="111.0" y="422" font-size="10.6" fill="#f4f4f4" text-anchor="middle">28</text>
<line x1="140.5" y1="399.5" x2="140.5" y2="403" stroke="#b9c6d3"/>
<text x="140.0" y="422" font-size="10.6" fill="#f4f4f4" text-anchor="middle">29</text>
<line x1="170.5" y1="399.5" x2="170.5" y2="403" stroke="#b9c6d3"/>
<text x="170.0" y="422" font-size="10.6" fill="#f4f4f4" text-anchor="middle">30</text>
<line x1="200.5" y1="399.5" x2="200.5" y2="403" stroke="#b9c6d3"/>
<text x="200.0" y="422" font-size="10.6" fill="#f4f4f4" text-anchor="middle">1</text>
<line x1="230.5" y1="399.5" x2="230.5" y2="403" stroke="#b9c6d3"/>
<text x="230.0" y="422" font-size="10.6" fill="#f4f4f4" text-anchor="middle">2</text>
<line x1="260.5" y1="399.5" x2="260.5" y2="403" stroke="#b9c6d3"/>
<text x="260.0" y="422" font-size="10.6" fill="#f4f4f4" text-anchor="middle">5</text>
<line x1="289.5" y1="399.5" x2="289.5" y2="403" stroke="#b9c6d3"/>
<text x="289.0" y="422" font-size="10.6" fill="#f4f4f4" text-anchor="middle">6</text>
<line x1="319.5" y1="399.5" x2="319.5" y2="403" stroke="#b9c6d3"/>
<text x="319.0" y="422" font-size="10.6" fill="#f4f4f4" text-anchor="middle">7</text>
<line x1="349.5" y1="399.5" x2="349.5" y2="403" stroke="#b9c6d3"/>
<text x="349.0" y="422" font-size="10.6" fill="#f4f4f4" text-anchor="middle">8</text>
<line x1="378.5" y1="399.5" x2="378.5" y2="403" stroke="#b9c6d3"/>
<text x="378.0" y="422" font-size="10.6" fill="#f4f4f4" text-anchor="middle">9</text>
<line x1="408.5" y1="399.5" x2="408.5" y2="403" stroke="#b9c6d3"/>
<text x="408.0" y="422" font-size="10.6" fill="#f4f4f4" text-anchor="middle">12</text>
<line x1="438.5" y1="399.5" x2="438.5" y2="403" stroke="#b9c6d3"/>
<text x="438.0" y="422" font-size="10.6" fill="#f4f4f4" text-anchor="middle">13</text>
<line x1="468.5" y1="399.5" x2="468.5" y2="403" stroke="#b9c6d3"/>
<text x="468.0" y="422" font-size="10.6" fill="#f4f4f4" text-anchor="middle">14</text>
<line x1="497.5" y1="399.5" x2="497.5" y2="403" stroke="#b9c6d3"/>
<text x="497.0" y="422" font-size="10.6" fill="#f4f4f4" text-anchor="middle">15</text>
<line x1="527.5" y1="399.5" x2="527.5" y2="403" stroke="#b9c6d3"/>
<text x="527.0" y="422" font-size="10.6" fill="#f4f4f4" text-anchor="middle">16</text>
<line x1="557.5" y1="399.5" x2="557.5" y2="403" stroke="#b9c6d3"/>
<text x="557.0" y="422" font-size="10.6" fill="#f4f4f4" text-anchor="middle">19</text>
<line x1="586.5" y1="399.5" x2="586.5" y2="403" stroke="#b9c6d3"/>
<text x="586.0" y="422" font-size="10.6" fill="#f4f4f4" text-anchor="middle">20</text>
<line x1="616.5" y1="399.5" x2="616.5" y2="403" stroke="#b9c6d3"/>
<text x="616.0" y="422" font-size="10.6" fill="#f4f4f4" text-anchor="middle">21</text>
<line x1="646.5" y1="399.5" x2="646.5" y2="403" stroke="#b9c6d3"/>
<text x="646.0" y="422" font-size="10.6" fill="#f4f4f4" text-anchor="middle">22</text>
<line x1="676.5" y1="399.5" x2="676.5" y2="403" stroke="#b9c6d3"/>
<text x="676.0" y="422" font-size="10.6" fill="#f4f4f4" text-anchor="middle">23</text>
<line x1="705.5" y1="399.5" x2="705.5" y2="403" stroke="#b9c6d3"/>
<text x="705.0" y="422" font-size="10.6" fill="#f4f4f4" text-anchor="middle">26</text>
<line x1="735.5" y1="399.5" x2="735.5" y2="403" stroke="#b9c6d3"/>
<text x="735.0" y="422" font-size="10.6" fill="#f4f4f4" text-anchor="middle">27</text>
<line x1="765.5" y1="399.5" x2="765.5" y2="403" stroke="#b9c6d3"/>
<text x="765.0" y="422" font-size="10.6" fill="#f4f4f4" text-anchor="middle">28</text>
<line x1="794.5" y1="399.5" x2="794.5" y2="403" stroke="#b9c6d3"/>
<text x="794.0" y="422" font-size="10.6" fill="#f4f4f4" text-anchor="middle">29</text>
<line x1="824.5" y1="399.5" x2="824.5" y2="403" stroke="#b9c6d3"/>
<text x="824.0" y="422" font-size="10.6" fill="#f4f4f4" text-anchor="middle">30</text>
<line x1="854.5" y1="399.5" x2="854.5" y2="403" stroke="#b9c6d3"/>
<text x="854.0" y="422" font-size="10.6" fill="#f4f4f4" text-anchor="middle">2</text>
<line x1="884.5" y1="399.5" x2="884.5" y2="403" stroke="#b9c6d3"/>
<text x="884.0" y="422" font-size="10.6" fill="#f4f4f4" text-anchor="middle">3</text>
<path d="M14.5 376.5 H82.5 Q84.5 376.5 84.5 378.5 V393.5 Q84.5 395.5 82.5 395.5 H14.5 Z" fill="#5e6f84" stroke="#a9bac9"/>
<rect x="14.0" y="376" width="2" height="27" fill="#d2ebe2"/>
<text x="22.5" y="390" font-size="11" fill="#eef2f6">Июнь 2021</text>
<path d="M200.5 376.5 H267.5 Q269.5 376.5 269.5 378.5 V393.5 Q269.5 395.5 267.5 395.5 H200.5 Z" fill="#5e6f84" stroke="#a9bac9"/>
<rect x="200.0" y="376" width="2" height="27" fill="#d2ebe2"/>
<text x="208.5" y="390" font-size="11" fill="#eef2f6">Июль 2021</text>
<path d="M854.5 376.5 H913 Q915 376.5 915 378.5 V393.5 Q915 395.5 913 395.5 H854.5 Z" fill="#5e6f84" stroke="#a9bac9"/>
<rect x="854.0" y="376" width="2" height="27" fill="#d2ebe2"/>
<text x="863" y="390" font-size="11" fill="#eef2f6">Авг 2021</text>
</svg></body></html>
